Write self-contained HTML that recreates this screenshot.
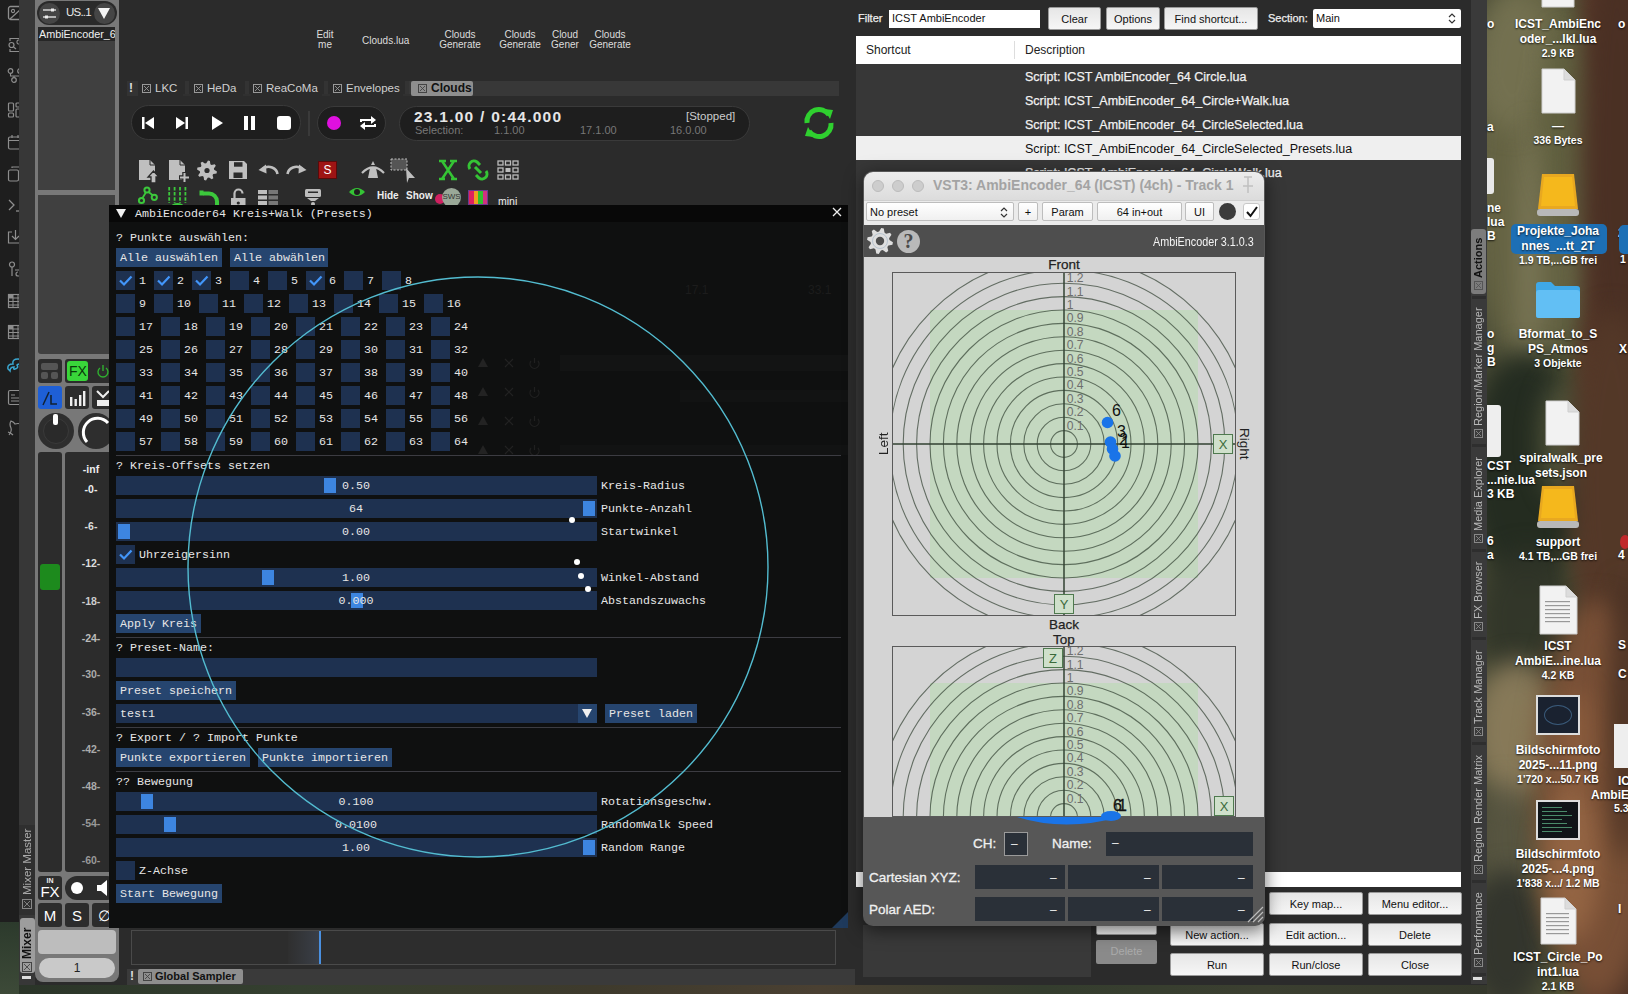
<!DOCTYPE html><html><head><meta charset="utf-8"><style>
*{margin:0;padding:0;box-sizing:border-box}
html,body{width:1628px;height:994px;overflow:hidden;background:#2b2b2b;font-family:"Liberation Sans",sans-serif;position:relative}
div{position:absolute}
.m{font-family:"Liberation Mono",monospace;font-size:11.67px;color:#e6e6e6;line-height:14px}
.fr{background:#1e3150}
.bt{background:#254672}
.mac{font-family:"Liberation Sans",sans-serif;font-size:11px;color:#111;background:linear-gradient(#fbfbfb,#e4e4e4);border:1px solid #a9a9a9;border-radius:3px;text-align:center}
.vt{writing-mode:vertical-rl;transform:rotate(180deg);white-space:nowrap}
</style></head><body>
<div style="position:absolute;left:1487px;top:0px;width:141px;height:994px;overflow:hidden;background:linear-gradient(90deg,#4a4c36 0%,#4f5236 55%,#5a3a2b 75%,#4e3326 100%)"><div style="left:-20px;top:-30px;width:130px;height:400px;border-radius:50%;background:rgba(102,100,68,.95);filter:blur(12px)"></div><div style="left:-15px;top:-10px;width:80px;height:140px;border-radius:50%;background:rgba(125,122,88,.6);filter:blur(12px)"></div><div style="left:55px;top:30px;width:50px;height:180px;border-radius:50%;background:rgba(95,95,62,.8);filter:blur(12px)"></div><div style="left:35px;top:120px;width:14px;height:280px;border-radius:50%;background:rgba(165,158,125,.55);filter:blur(12px)"></div><div style="left:-20px;top:350px;width:120px;height:240px;border-radius:50%;background:rgba(34,42,32,.95);filter:blur(12px)"></div><div style="left:53px;top:380px;width:44px;height:120px;border-radius:50%;background:rgba(110,110,75,.6);filter:blur(12px)"></div><div style="left:-10px;top:550px;width:100px;height:140px;border-radius:50%;background:rgba(48,52,40,.9);filter:blur(12px)"></div><div style="left:-15px;top:660px;width:90px;height:140px;border-radius:50%;background:rgba(150,132,98,.8);filter:blur(12px)"></div><div style="left:-10px;top:780px;width:60px;height:120px;border-radius:50%;background:rgba(95,90,72,.6);filter:blur(12px)"></div><div style="left:-20px;top:870px;width:80px;height:140px;border-radius:50%;background:rgba(50,52,44,.95);filter:blur(12px)"></div><div style="left:94px;top:-70px;width:72px;height:460px;border-radius:50%;background:rgba(74,48,36,.98);filter:blur(12px)"></div><div style="left:83px;top:310px;width:84px;height:340px;border-radius:50%;background:rgba(84,56,40,.98);filter:blur(12px)"></div><div style="left:48px;top:600px;width:124px;height:400px;border-radius:50%;background:rgba(120,80,54,.98);filter:blur(12px)"></div><div style="left:57px;top:780px;width:56px;height:160px;border-radius:50%;background:rgba(160,110,72,.7);filter:blur(12px)"></div><div style="left:72px;top:690px;width:36px;height:100px;border-radius:50%;background:rgba(150,100,65,.6);filter:blur(12px)"></div><div style="left:124px;top:580px;width:28px;height:280px;border-radius:50%;background:rgba(66,44,32,.9);filter:blur(12px)"></div></div>
<div style="position:absolute;left:0px;top:985px;width:1487px;height:9px;background:linear-gradient(90deg,#2a3428,#354030 20%,#3e3a2c 40%,#4a4032 55%,#343d2e 70%,#3b3f30 85%,#35382c)"></div>
<div style="position:absolute;left:0px;top:922px;width:19px;height:72px;background:linear-gradient(#2c3a2c,#3d4a38)"></div>
<div style="position:absolute;left:0px;top:0px;width:19px;height:922px;background:#1e1e1e"></div>
<svg style="position:absolute;left:6px;top:4px;" width="16" height="18" viewBox="0 0 16 18"><rect x="2.5" y="2.5" width="14" height="13" rx="2" fill="none" stroke="#8e8e8e" stroke-width="1.3"/><circle cx="7" cy="7" r="1.6" fill="none" stroke="#8e8e8e" stroke-width="1.1"/><path d="M4 15 L15 5" stroke="#8e8e8e" stroke-width="1.2"/></svg>
<svg style="position:absolute;left:6px;top:36px;" width="16" height="18" viewBox="0 0 16 18"><path d="M4 5 V2.5 H16 M4 13 V15.5 H16" fill="none" stroke="#8e8e8e" stroke-width="1.2"/><circle cx="5.5" cy="9" r="2.5" fill="none" stroke="#8e8e8e" stroke-width="1.2"/><path d="M7.5 11 L10 13" stroke="#8e8e8e" stroke-width="1.2"/><rect x="11" y="4" width="6" height="4" rx="1.5" fill="none" stroke="#8e8e8e" stroke-width="1.1"/></svg>
<svg style="position:absolute;left:6px;top:67px;" width="16" height="18" viewBox="0 0 16 18"><circle cx="4.5" cy="4" r="2.3" fill="none" stroke="#8e8e8e" stroke-width="1.2"/><circle cx="8" cy="13" r="2.3" fill="none" stroke="#8e8e8e" stroke-width="1.2"/><circle cx="14" cy="4" r="2.3" fill="none" stroke="#8e8e8e" stroke-width="1.2"/><path d="M4.5 6.5 V9 H14 V6.5 M8 9 V10.5" fill="none" stroke="#8e8e8e" stroke-width="1.1"/></svg>
<svg style="position:absolute;left:6px;top:101px;" width="16" height="18" viewBox="0 0 16 18"><rect x="2.5" y="2" width="5" height="8" rx="1" fill="none" stroke="#8e8e8e" stroke-width="1.2"/><rect x="2.5" y="12" width="5" height="4" rx="1" fill="none" stroke="#8e8e8e" stroke-width="1.2"/><rect x="10" y="2" width="6" height="4" rx="1" fill="none" stroke="#8e8e8e" stroke-width="1.2"/><rect x="10" y="8" width="6" height="8" rx="1" fill="none" stroke="#8e8e8e" stroke-width="1.2"/></svg>
<svg style="position:absolute;left:6px;top:133px;" width="16" height="18" viewBox="0 0 16 18"><rect x="2.5" y="4" width="14" height="12" rx="1.5" fill="none" stroke="#8e8e8e" stroke-width="1.2"/><path d="M2.5 7.5 H16 M6 2 V5 M12 2 V5" stroke="#8e8e8e" stroke-width="1.2"/></svg>
<svg style="position:absolute;left:6px;top:165px;" width="16" height="18" viewBox="0 0 16 18"><rect x="2.5" y="5" width="10" height="11" rx="1.5" fill="none" stroke="#8e8e8e" stroke-width="1.2"/><path d="M6 3 V2 H16 V12 H13" fill="none" stroke="#8e8e8e" stroke-width="1.2"/></svg>
<svg style="position:absolute;left:6px;top:196px;" width="16" height="18" viewBox="0 0 16 18"><path d="M3 4 L8 9 L3 14" fill="none" stroke="#8e8e8e" stroke-width="1.3"/><path d="M10 15 H17" stroke="#8e8e8e" stroke-width="1.3"/></svg>
<svg style="position:absolute;left:6px;top:228px;" width="16" height="18" viewBox="0 0 16 18"><path d="M6 4 H2.5 V15 H16 V4 H13" fill="none" stroke="#8e8e8e" stroke-width="1.2"/><path d="M9.5 2 V11 M6 8 L9.5 11.5 L13 8" fill="none" stroke="#8e8e8e" stroke-width="1.2"/></svg>
<svg style="position:absolute;left:6px;top:260px;" width="16" height="18" viewBox="0 0 16 18"><circle cx="6" cy="4.5" r="2.5" fill="none" stroke="#8e8e8e" stroke-width="1.2"/><path d="M6 7 V16 M9 10 H14 M12 12 A2 2 0 1 0 12 16 H16" fill="none" stroke="#8e8e8e" stroke-width="1.2"/></svg>
<svg style="position:absolute;left:6px;top:292px;" width="16" height="18" viewBox="0 0 16 18"><rect x="2.5" y="2.5" width="14" height="13" fill="none" stroke="#8e8e8e" stroke-width="1.2"/><path d="M2.5 6 H16 M2.5 9.5 H16 M2.5 13 H16 M7 2.5 V16 M12 2.5 V16" stroke="#8e8e8e" stroke-width="1"/><rect x="2.5" y="2.5" width="4.5" height="3.5" fill="#8e8e8e"/></svg>
<svg style="position:absolute;left:6px;top:323px;" width="16" height="18" viewBox="0 0 16 18"><rect x="2.5" y="2.5" width="14" height="13" fill="none" stroke="#8e8e8e" stroke-width="1.2"/><path d="M2.5 6 H16 M2.5 9.5 H16 M2.5 13 H16 M7 2.5 V16 M12 2.5 V16" stroke="#8e8e8e" stroke-width="1"/><rect x="2.5" y="2.5" width="4.5" height="3.5" fill="#8e8e8e"/></svg>
<svg style="position:absolute;left:6px;top:356px;" width="16" height="18" viewBox="0 0 16 18"><path d="M2 13 Q1 8 7 8 Q6 3 12 3 Q17 3 17 9 Q13 7 11 9 Q13 12 9 13 Q7 14 8 11 Q4 11 4 15 Z" fill="none" stroke="#3aa6cf" stroke-width="1.5"/></svg>
<svg style="position:absolute;left:6px;top:388px;" width="16" height="18" viewBox="0 0 16 18"><rect x="2.5" y="2.5" width="13" height="14" rx="1.5" fill="none" stroke="#8e8e8e" stroke-width="1.2"/><path d="M5 7 H9 M5 10 H14 M5 13 H14" stroke="#8e8e8e" stroke-width="1.1"/></svg>
<svg style="position:absolute;left:6px;top:419px;" width="16" height="18" viewBox="0 0 16 18"><path d="M3 16 Q6 12 5 9 Q3 5 5 2 Q8 3 9 5 Q12 4 15 5" fill="none" stroke="#8e8e8e" stroke-width="1.2"/><path d="M2 13 Q5 14 7 16" fill="none" stroke="#8e8e8e" stroke-width="1.2"/></svg>
<div style="position:absolute;left:19px;top:0px;width:16px;height:985px;background:#373737"></div>
<div style="position:absolute;left:19px;top:825px;width:16px;height:90px;background:#2f2f2f"></div>
<div class="vt" style="left:21px;top:833px;width:13px;height:62px;font-size:11.5px;color:#aaa;line-height:13px">Mixer Master</div>
<div style="position:absolute;left:22px;top:899px;width:10px;height:10px;border:1px solid #888"><svg style="position:absolute;left:0;top:0" width="8" height="8"><path d="M1 1L7 7M7 1L1 7" stroke="#888" stroke-width="0.9"/></svg></div>
<div style="position:absolute;left:20px;top:918px;width:15px;height:55px;background:#9d9d9d;border-radius:3px"></div>
<div class="vt" style="left:21px;top:923px;width:13px;height:36px;font-size:12px;font-weight:bold;color:#111;line-height:13px">Mixer</div>
<div style="position:absolute;left:22px;top:962px;width:10px;height:10px;border:1px solid #444"><svg style="position:absolute;left:0;top:0" width="8" height="8"><path d="M1 1L7 7M7 1L1 7" stroke="#444" stroke-width="0.9"/></svg></div>
<div style="position:absolute;left:22px;top:976px;width:9px;height:3px;background:#ddd"></div>
<div style="position:absolute;left:35px;top:0px;width:84px;height:982px;background:#787878;border-radius:0 0 8px 8px"></div>
<div style="position:absolute;left:37px;top:1px;width:80px;height:24px;background:#2a2a2a;border-radius:12px"></div>
<div style="position:absolute;left:39px;top:3px;width:21px;height:21px;background:#454545;border-radius:50%"></div>
<svg style="position:absolute;left:43px;top:8px;" width="14" height="11" viewBox="0 0 14 11"><line x1="0" y1="2" x2="13" y2="2" stroke="#eee" stroke-width="1.3"/><line x1="0" y1="9" x2="13" y2="9" stroke="#eee" stroke-width="1.3"/><rect x="8" y="0.5" width="3" height="3" fill="#eee"/><rect x="2" y="7.5" width="3" height="3" fill="#eee"/></svg>
<div style="position:absolute;left:66px;top:6px;white-space:nowrap;font-size:11.5px;color:#e8e8e8;letter-spacing:-0.8px">US..1</div>
<div style="position:absolute;left:94px;top:3px;width:21px;height:21px;background:#454545;border-radius:50%"></div>
<svg style="position:absolute;left:98px;top:8px;" width="13" height="12" viewBox="0 0 13 12"><polygon points="0,0 12,0 6,11" fill="#f4f4f4"/></svg>
<div style="position:absolute;left:38px;top:27px;width:77px;height:14px;background:#262626;overflow:hidden"><div style="left:1px;top:1px;font-size:10.8px;color:#f0f0f0;white-space:nowrap">AmbiEncoder_64</div></div>
<div style="position:absolute;left:38px;top:41px;width:77px;height:149px;background:#404040"></div>
<div style="position:absolute;left:38px;top:195px;width:77px;height:159px;background:#404040;border-radius:0 0 3px 3px"></div>
<div style="position:absolute;left:38px;top:359px;width:24px;height:24px;background:#2c2c2c;border-radius:3px"></div>
<div style="position:absolute;left:41px;top:363px;width:17px;height:7px;background:#555;border-radius:2px"></div>
<div style="position:absolute;left:41px;top:372px;width:7px;height:7px;background:#555;border-radius:2px"></div>
<div style="position:absolute;left:51px;top:372px;width:7px;height:7px;background:#555;border-radius:2px"></div>
<div style="position:absolute;left:65px;top:359px;width:54px;height:24px;background:#2c2c2c;border-radius:3px"></div>
<div style="position:absolute;left:67px;top:361px;width:21px;height:20px;background:#39d63a;border-radius:3px"><div style="left:1px;top:2px;width:20px;text-align:center;font-size:14px;color:#0a3a0a">FX</div></div>
<svg style="position:absolute;left:96px;top:364px;" width="14" height="14" viewBox="0 0 14 14"><path d="M4 4 A5 5 0 1 0 10 4" fill="none" stroke="#2fb02f" stroke-width="1.4"/><line x1="7" y1="1" x2="7" y2="7" stroke="#2fb02f" stroke-width="1.4"/></svg>
<div style="position:absolute;left:38px;top:386px;width:24px;height:23px;background:#1e5fd6;border-radius:3px"></div>
<svg style="position:absolute;left:40px;top:389px;" width="20" height="18" viewBox="0 0 20 18"><path d="M3 16 L9 3" stroke="#123" stroke-width="1.5"/><path d="M11 6 L11 15 L17 15" fill="none" stroke="#123" stroke-width="1.6"/></svg>
<div style="position:absolute;left:65px;top:386px;width:24px;height:23px;background:#2c2c2c;border-radius:3px"></div>
<svg style="position:absolute;left:68px;top:390px;" width="18" height="16" viewBox="0 0 18 16"><rect x="2" y="7" width="2.4" height="9" fill="#eee"/><rect x="6.5" y="9" width="2.4" height="7" fill="#eee"/><rect x="11" y="5" width="2.4" height="11" fill="#eee"/><rect x="15" y="1" width="2.4" height="15" fill="#eee"/></svg>
<div style="position:absolute;left:92px;top:386px;width:27px;height:23px;background:#2c2c2c;border-radius:3px"></div>
<svg style="position:absolute;left:96px;top:390px;" width="14" height="16" viewBox="0 0 14 16"><path d="M1 1 L7 7 L13 1" fill="none" stroke="#eee" stroke-width="2"/><rect x="1" y="10" width="13" height="6" fill="#eee"/></svg>
<div style="position:absolute;left:38px;top:413px;width:36px;height:36px;background:#2e2e2e;border-radius:50%"></div>
<div style="position:absolute;left:43px;top:418px;width:26px;height:26px;background:#2a2a2a;border-radius:50%;border:1px solid #3a3a3a"></div>
<div style="position:absolute;left:53px;top:414px;width:5px;height:11px;background:#fff;border-radius:2px"></div>
<div style="position:absolute;left:78px;top:413px;width:36px;height:36px;background:#2e2e2e;border-radius:50%"></div>
<svg style="position:absolute;left:78px;top:413px;" width="36" height="36" viewBox="0 0 36 36"><path d="M9 29 A13 13 0 1 1 30 10" fill="none" stroke="#fff" stroke-width="3"/></svg>
<div style="position:absolute;left:38px;top:452px;width:24px;height:420px;background:#2c2c2c;border-radius:3px"></div>
<div style="position:absolute;left:40px;top:564px;width:20px;height:26px;background:#1d8a1d;border-radius:3px"></div>
<div style="position:absolute;left:65px;top:452px;width:54px;height:420px;background:#2c2c2c;border-radius:3px"></div>
<div style="position:absolute;left:71.0px;top:463px;width:40px;text-align:center;white-space:nowrap;font-size:10.5px;font-weight:bold;color:#eee">-inf</div>
<div style="position:absolute;left:71.0px;top:483px;width:40px;text-align:center;white-space:nowrap;font-size:10.5px;font-weight:bold;color:#eee">-0-</div>
<div style="position:absolute;left:71.0px;top:520px;width:40px;text-align:center;white-space:nowrap;font-size:10.5px;font-weight:bold;color:#ddd">-6-</div>
<div style="position:absolute;left:71.0px;top:557px;width:40px;text-align:center;white-space:nowrap;font-size:10.5px;font-weight:bold;color:#ddd">-12-</div>
<div style="position:absolute;left:71.0px;top:595px;width:40px;text-align:center;white-space:nowrap;font-size:10.5px;font-weight:bold;color:#ccc">-18-</div>
<div style="position:absolute;left:71.0px;top:632px;width:40px;text-align:center;white-space:nowrap;font-size:10.5px;font-weight:bold;color:#bbb">-24-</div>
<div style="position:absolute;left:71.0px;top:668px;width:40px;text-align:center;white-space:nowrap;font-size:10.5px;font-weight:bold;color:#aaa">-30-</div>
<div style="position:absolute;left:71.0px;top:706px;width:40px;text-align:center;white-space:nowrap;font-size:10.5px;font-weight:bold;color:#aaa">-36-</div>
<div style="position:absolute;left:71.0px;top:743px;width:40px;text-align:center;white-space:nowrap;font-size:10.5px;font-weight:bold;color:#aaa">-42-</div>
<div style="position:absolute;left:71.0px;top:780px;width:40px;text-align:center;white-space:nowrap;font-size:10.5px;font-weight:bold;color:#aaa">-48-</div>
<div style="position:absolute;left:71.0px;top:817px;width:40px;text-align:center;white-space:nowrap;font-size:10.5px;font-weight:bold;color:#999">-54-</div>
<div style="position:absolute;left:71.0px;top:854px;width:40px;text-align:center;white-space:nowrap;font-size:10.5px;font-weight:bold;color:#999">-60-</div>
<div style="position:absolute;left:38px;top:876px;width:24px;height:24px;background:#2c2c2c;border-radius:3px"><div style="left:0;top:1px;width:24px;text-align:center;font-size:7px;color:#eee;font-weight:bold">IN</div><div style="left:0;top:7px;width:24px;text-align:center;font-size:15px;color:#fff">FX</div></div>
<div style="position:absolute;left:65px;top:876px;width:54px;height:24px;background:#2c2c2c;border-radius:12px"></div>
<div style="position:absolute;left:71px;top:882px;width:12px;height:12px;background:#fff;border-radius:50%"></div>
<svg style="position:absolute;left:97px;top:880px;" width="14" height="16" viewBox="0 0 14 16"><rect x="0" y="5" width="4" height="6" fill="#fff"/><polygon points="4,5 10,0 10,16 4,11" fill="#fff"/></svg>
<div style="position:absolute;left:38px;top:903px;width:24px;height:24px;background:#2c2c2c;border-radius:3px"><div style="left:0;top:4px;width:24px;text-align:center;font-size:15px;color:#fff">M</div></div>
<div style="position:absolute;left:65px;top:903px;width:24px;height:24px;background:#2c2c2c;border-radius:3px"><div style="left:0;top:4px;width:24px;text-align:center;font-size:15px;color:#fff">S</div></div>
<div style="position:absolute;left:92px;top:903px;width:27px;height:24px;background:#2c2c2c;border-radius:3px"><div style="left:0;top:4px;width:24px;text-align:center;font-size:15px;color:#fff">&#8709;</div></div>
<div style="position:absolute;left:38px;top:930px;width:78px;height:24px;background:#bdbdbd;border-radius:4px"></div>
<div style="position:absolute;left:39px;top:958px;width:76px;height:20px;background:#c9c9c9;border-radius:10px"><div style="left:0;top:3px;width:76px;text-align:center;font-size:12px;color:#222">1</div></div>
<div style="position:absolute;left:305.0px;top:30px;width:40px;text-align:center;white-space:nowrap;font-size:10px;color:#ddd;line-height:10px">Edit<br>me</div>
<div style="position:absolute;left:362px;top:35px;white-space:nowrap;font-size:10px;color:#ddd">Clouds.lua</div>
<div style="position:absolute;left:430.0px;top:30px;width:60px;text-align:center;white-space:nowrap;font-size:10px;color:#ddd;line-height:10px">Clouds<br>Generate</div>
<div style="position:absolute;left:490.0px;top:30px;width:60px;text-align:center;white-space:nowrap;font-size:10px;color:#ddd;line-height:10px">Clouds<br>Generate</div>
<div style="position:absolute;left:535.0px;top:30px;width:60px;text-align:center;white-space:nowrap;font-size:10px;color:#ddd;line-height:10px">Cloud<br>Gener</div>
<div style="position:absolute;left:580.0px;top:30px;width:60px;text-align:center;white-space:nowrap;font-size:10px;color:#ddd;line-height:10px">Clouds<br>Generate</div>
<div style="position:absolute;left:405px;top:81px;width:434px;height:15px;background:#383838"></div>
<div style="position:absolute;left:127px;top:81px;width:11px;height:15px;background:#333"></div>
<div style="position:absolute;left:129px;top:81px;white-space:nowrap;font-size:12px;color:#ddd;font-weight:bold">!</div>
<div style="position:absolute;left:142px;top:84px;width:9px;height:9px;border:1px solid #999"><svg style="position:absolute;left:0;top:0" width="7" height="7"><path d="M1 1L6 6M6 1L1 6" stroke="#999" stroke-width="0.9"/></svg></div>
<div style="position:absolute;left:155px;top:82px;white-space:nowrap;font-size:11.5px;color:#d0d0d0">LKC</div>
<div style="position:absolute;left:185px;top:81px;width:4px;height:14px;background:#333"></div>
<div style="position:absolute;left:183px;top:94px;width:8px;height:2px;background:#303030"></div>
<div style="position:absolute;left:194px;top:84px;width:9px;height:9px;border:1px solid #999"><svg style="position:absolute;left:0;top:0" width="7" height="7"><path d="M1 1L6 6M6 1L1 6" stroke="#999" stroke-width="0.9"/></svg></div>
<div style="position:absolute;left:207px;top:82px;white-space:nowrap;font-size:11.5px;color:#d0d0d0">HeDa</div>
<div style="position:absolute;left:245px;top:81px;width:4px;height:14px;background:#333"></div>
<div style="position:absolute;left:243px;top:94px;width:8px;height:2px;background:#303030"></div>
<div style="position:absolute;left:253px;top:84px;width:9px;height:9px;border:1px solid #999"><svg style="position:absolute;left:0;top:0" width="7" height="7"><path d="M1 1L6 6M6 1L1 6" stroke="#999" stroke-width="0.9"/></svg></div>
<div style="position:absolute;left:266px;top:82px;white-space:nowrap;font-size:11.5px;color:#d0d0d0">ReaCoMa</div>
<div style="position:absolute;left:324px;top:81px;width:4px;height:14px;background:#333"></div>
<div style="position:absolute;left:322px;top:94px;width:8px;height:2px;background:#303030"></div>
<div style="position:absolute;left:333px;top:84px;width:9px;height:9px;border:1px solid #999"><svg style="position:absolute;left:0;top:0" width="7" height="7"><path d="M1 1L6 6M6 1L1 6" stroke="#999" stroke-width="0.9"/></svg></div>
<div style="position:absolute;left:346px;top:82px;white-space:nowrap;font-size:11.5px;color:#d0d0d0">Envelopes</div>
<div style="position:absolute;left:405px;top:81px;width:4px;height:14px;background:#333"></div>
<div style="position:absolute;left:403px;top:94px;width:8px;height:2px;background:#303030"></div>
<div style="position:absolute;left:411px;top:81px;width:62px;height:15px;background:#8e8e8e;border-radius:2px"></div>
<div style="position:absolute;left:418px;top:84px;width:9px;height:9px;border:1px solid #444"><svg style="position:absolute;left:0;top:0" width="7" height="7"><path d="M1 1L6 6M6 1L1 6" stroke="#444" stroke-width="0.9"/></svg></div>
<div style="position:absolute;left:431px;top:81px;white-space:nowrap;font-size:12px;color:#111;font-weight:bold">Clouds</div>
<div style="position:absolute;left:131px;top:105px;width:170px;height:35px;background:#1e1e1e;border:1px solid #3a3a3a;border-radius:18px"></div>
<svg style="position:absolute;left:141px;top:116px;" width="14" height="14" viewBox="0 0 14 14"><rect x="1" y="1" width="2.5" height="12" fill="#fff"/><polygon points="13,1 13,13 4,7" fill="#fff"/></svg>
<svg style="position:absolute;left:175px;top:116px;" width="14" height="14" viewBox="0 0 14 14"><rect x="10.5" y="1" width="2.5" height="12" fill="#fff"/><polygon points="1,1 1,13 10,7" fill="#fff"/></svg>
<svg style="position:absolute;left:210px;top:115px;" width="14" height="16" viewBox="0 0 14 16"><polygon points="2,1 2,15 13,8" fill="#fff"/></svg>
<svg style="position:absolute;left:243px;top:115px;" width="14" height="16" viewBox="0 0 14 16"><rect x="1" y="1" width="4" height="14" fill="#fff"/><rect x="8" y="1" width="4" height="14" fill="#fff"/></svg>
<div style="position:absolute;left:277px;top:116px;width:14px;height:14px;background:#fff;border-radius:3px"></div>
<div style="position:absolute;left:308px;top:111px;width:2px;height:25px;background:#3a3a3a"></div>
<div style="position:absolute;left:317px;top:106px;width:69px;height:34px;background:#1e1e1e;border:1px solid #3a3a3a;border-radius:17px"></div>
<div style="position:absolute;left:327px;top:116px;width:14px;height:14px;background:#e010e0;border-radius:50%"></div>
<svg style="position:absolute;left:359px;top:114px;" width="18" height="18" viewBox="0 0 18 18"><path d="M2 8 V6 H14" fill="none" stroke="#fff" stroke-width="2"/><polygon points="12,2 17,6 12,10" fill="#fff"/><path d="M16 10 V12 H4" fill="none" stroke="#fff" stroke-width="2"/><polygon points="6,8 1,12 6,16" fill="#fff"/></svg>
<div style="position:absolute;left:399px;top:106px;width:351px;height:35px;background:#1e1e1e;border:1px solid #3a3a3a;border-radius:18px"></div>
<div style="position:absolute;left:414px;top:108px;white-space:nowrap;font-size:15.5px;font-weight:bold;color:#e6e6e6;letter-spacing:1.25px">23.1.00 / 0:44.000</div>
<div style="position:absolute;left:415px;top:124px;white-space:nowrap;font-size:11px;color:#777">Selection:</div>
<div style="position:absolute;left:494px;top:124px;white-space:nowrap;font-size:11px;color:#777">1.1.00</div>
<div style="position:absolute;left:580px;top:124px;white-space:nowrap;font-size:11px;color:#777">17.1.00</div>
<div style="position:absolute;left:670px;top:124px;white-space:nowrap;font-size:11px;color:#777">16.0.00</div>
<div style="position:absolute;left:686px;top:110px;white-space:nowrap;font-size:11.5px;color:#ccc">[Stopped]</div>
<svg style="position:absolute;left:802px;top:106px;" width="34" height="34" viewBox="0 0 34 34"><path d="M5 17 A12 12 0 0 1 27 9" fill="none" stroke="#2fd02f" stroke-width="5"/><polygon points="22,3 31,4 28,13" fill="#2fd02f"/><path d="M29 17 A12 12 0 0 1 7 25" fill="none" stroke="#2fd02f" stroke-width="5"/><polygon points="12,31 3,30 6,21" fill="#2fd02f"/></svg>
<svg style="position:absolute;left:120px;top:150px;" width="220" height="40" viewBox="0 0 220 40"><g transform="translate(-120 -150)"><path d="M139 160 H150 L155 165 V180 H139 Z" fill="#bfbfbf"/><path d="M150 160 V165 H155" fill="none" stroke="#2b2b2b" stroke-width="1"/><path d="M153.5 171 L159 177 H156 V183 H151 V177 H148 Z" fill="#bfbfbf" stroke="#2b2b2b" stroke-width="1.3"/><path d="M169 160 H180 L185 165 V180 H169 Z" fill="#bfbfbf"/><path d="M180 160 V165 H185" fill="none" stroke="#2b2b2b" stroke-width="1"/><path d="M184.5 172 V183 M179 177.5 H190" stroke="#2b2b2b" stroke-width="4.5"/><path d="M184.5 173 V182 M180 177.5 H189" stroke="#bfbfbf" stroke-width="2"/><polygon points="216.95,171.48 216.57,173.40 213.35,173.89 212.57,175.07 213.34,178.23 211.71,179.32 209.09,177.39 207.71,177.67 206.02,180.45 204.10,180.07 203.61,176.85 202.43,176.07 199.27,176.84 198.18,175.21 200.11,172.59 199.83,171.21 197.05,169.52 197.43,167.60 200.65,167.11 201.43,165.93 200.66,162.77 202.29,161.68 204.91,163.61 206.29,163.33 207.98,160.55 209.90,160.93 210.39,164.15 211.57,164.93 214.73,164.16 215.82,165.79 213.89,168.41 214.17,169.79" fill="#bfbfbf"/><circle cx="207" cy="170.5" r="2.6" fill="#2b2b2b"/><path d="M229 161 H244 L247 164 V179 H229 Z" fill="#bfbfbf" rx="2"/><rect x="234" y="162.2" width="8.5" height="4.5" fill="#2b2b2b"/><rect x="233.5" y="172.5" width="9" height="5.5" fill="#2b2b2b"/><path d="M263 168.5 A9 8 0 0 1 277.5 174" fill="none" stroke="#bfbfbf" stroke-width="2.6"/><polygon points="258.5,170 266,164.5 266.5,173.5" fill="#bfbfbf"/><path d="M302 168.5 A9 8 0 0 0 287.5 174" fill="none" stroke="#bfbfbf" stroke-width="2.6"/><polygon points="306.5,170 299,164.5 298.5,173.5" fill="#bfbfbf"/></g></svg>
<div style="position:absolute;left:318px;top:161px;width:19px;height:18px;background:#9e1414;border:1px solid #5a0a0a"><div style="left:0;top:1px;width:17px;text-align:center;font-size:12px;color:#fff">S</div></div>
<svg style="position:absolute;left:361px;top:160px;" width="24" height="20" viewBox="0 0 24 20"><path d="M1 13 Q12 2 23 13" fill="none" stroke="#bfbfbf" stroke-width="2.2"/><polygon points="12,1 14,5 10,5" fill="#bfbfbf"/><polygon points="9,8 15,8 17,18 7,18" fill="#bfbfbf"/></svg>
<svg style="position:absolute;left:390px;top:158px;" width="26" height="26" viewBox="0 0 26 26"><rect x="1" y="1" width="16" height="11" fill="#555" stroke="#bfbfbf" stroke-dasharray="2 1.5"/><polygon points="16,10 25,20 19,20 17,25" fill="#bfbfbf"/></svg>
<svg style="position:absolute;left:437px;top:159px;" width="22" height="22" viewBox="0 0 22 22"><path d="M2 2 H9 M13 2 H20 M5 2 Q11 11 17 20 M17 2 Q11 11 5 20 M2 20 H8 M14 20 H20" fill="none" stroke="#35c435" stroke-width="2.5"/></svg>
<svg style="position:absolute;left:467px;top:159px;" width="22" height="22" viewBox="0 0 22 22"><path d="M3 10 A5 5 0 0 1 10 3 L13 6 M19 12 A5 5 0 0 1 12 19 L9 16 M8 8 L14 14" fill="none" stroke="#35c435" stroke-width="3"/></svg>
<svg style="position:absolute;left:497px;top:160px;" width="22" height="20" viewBox="0 0 22 20"><g fill="none" stroke="#bbb" stroke-width="1.3"><rect x="1" y="1" width="5" height="4"/><rect x="8.5" y="1" width="5" height="4"/><rect x="16" y="1" width="5" height="4"/><rect x="1" y="8" width="5" height="4"/><rect x="16" y="8" width="5" height="4"/><rect x="1" y="15" width="5" height="4"/><rect x="8.5" y="15" width="5" height="4"/><rect x="16" y="15" width="5" height="4"/></g><rect x="8.5" y="8" width="5" height="4" fill="#bbb"/></svg>
<svg style="position:absolute;left:120px;top:184px;" width="220" height="21" viewBox="0 0 220 21"><g transform="translate(-120 -184)"><circle cx="147" cy="190" r="2.6" fill="none" stroke="#3cc83c" stroke-width="2"/><circle cx="141.5" cy="200.5" r="2.6" fill="none" stroke="#3cc83c" stroke-width="2"/><circle cx="154.3" cy="197.3" r="2.6" fill="none" stroke="#3cc83c" stroke-width="2"/><path d="M146 192.3 L142.5 198 M148.5 192 L152.8 195.3" stroke="#3cc83c" stroke-width="1.8"/><path d="M169.2 187 V203 M174.6 187 V203 M180 187 V203 M185.4 187 V203" stroke="#3cc83c" stroke-width="1.8" stroke-dasharray="3.5 1.6"/><ellipse cx="177.5" cy="206" rx="6" ry="3" fill="#3cc83c"/><path d="M203 193.5 H209 A8 8 0 0 1 217 201.5 V206" fill="none" stroke="#3cc83c" stroke-width="4"/><rect x="199.5" y="190.5" width="4" height="5" fill="#3cc83c"/><path d="M234.5 198 V193.5 A4 4 0 0 1 242.5 193.5" fill="none" stroke="#bdbdbd" stroke-width="2.2"/><rect x="231" y="198" width="14.5" height="9" fill="#bdbdbd"/><circle cx="238.3" cy="203" r="1.6" fill="#2b2b2b"/><g fill="#bdbdbd"><rect x="258" y="190" width="9" height="4"/><rect x="258" y="195.5" width="9" height="4"/><rect x="258" y="201" width="9" height="4"/></g><g fill="#777"><rect x="268.5" y="190" width="9.5" height="4"/><rect x="268.5" y="195.5" width="9.5" height="4"/><rect x="268.5" y="201" width="9.5" height="4"/></g><rect x="305" y="189" width="16" height="8" rx="1.5" fill="#bdbdbd"/><rect x="308" y="191.5" width="10" height="1.5" fill="#2b2b2b"/><path d="M307 198 H319 L315 201 H311 Z" fill="#bdbdbd"/><circle cx="313" cy="204" r="2" fill="#bdbdbd"/></g></svg>
<div style="position:absolute;left:120px;top:184px;width:730px;height:21px;overflow:hidden"><svg style="position:absolute;left:228px;top:1px;" width="18" height="14" viewBox="0 0 18 14"><path d="M1 7 Q9 -1 17 7 Q9 15 1 7Z" fill="#35c435"/><circle cx="9" cy="7" r="3" fill="#1e1e1e"/></svg><div style="left:257px;top:6px;font-size:10px;color:#eee;font-weight:bold">Hide</div><div style="left:286px;top:6px;font-size:10px;color:#eee;font-weight:bold">Show</div><div style="left:315px;top:10px;width:10px;height:10px;border-radius:50%;background:#d02060"></div><div style="left:322px;top:4px;width:19px;height:19px;border-radius:50%;background:#9aa898;font-size:8px;color:#333;text-align:center;line-height:18px">SWS</div><div style="left:348px;top:6px;width:20px;height:15px;border:1px solid #6a3a90;background:linear-gradient(90deg,#e02060 0 25%,#f0a020 25% 50%,#30c030 50% 75%,#d03080 75%)"></div><div style="left:378px;top:11px;font-size:10.5px;color:#eee">mini</div></div>
<div style="position:absolute;left:131px;top:930px;width:705px;height:35px;background:#2d2d2d;border:1px solid #4a4a4a"></div>
<div style="position:absolute;left:288px;top:931px;width:32px;height:33px;background:linear-gradient(90deg,#2f2f2f,#3a3f48)"></div>
<div style="position:absolute;left:319px;top:931px;width:2px;height:33px;background:#4a90e0"></div>
<div style="position:absolute;left:127px;top:969px;width:728px;height:16px;background:#3a3a3a"></div>
<div style="position:absolute;left:130px;top:969px;white-space:nowrap;font-size:12px;color:#ddd;font-weight:bold">!</div>
<div style="position:absolute;left:138px;top:969px;width:105px;height:15px;background:#8e8e8e;border-radius:2px"></div>
<div style="position:absolute;left:143px;top:972px;width:9px;height:9px;border:1px solid #444"><svg style="position:absolute;left:0;top:0" width="7" height="7"><path d="M1 1L6 6M6 1L1 6" stroke="#444" stroke-width="0.9"/></svg></div>
<div style="position:absolute;left:155px;top:970px;white-space:nowrap;font-size:11px;color:#111;font-weight:bold">Global Sampler</div>
<div style="position:absolute;left:109px;top:205px;width:739px;height:723px;background:#0f1010"></div>
<div style="position:absolute;left:109px;top:205px;width:739px;height:17px;background:#080808"></div>
<svg style="position:absolute;left:116px;top:209px;" width="11" height="10" viewBox="0 0 11 10"><polygon points="0,0 10,0 5,9" fill="#f0f0f0"/></svg>
<div class="m" style="left:135px;top:207px">AmbiEncoder64 Kreis+Walk (Presets)</div>
<svg style="position:absolute;left:832px;top:207px;" width="10" height="10" viewBox="0 0 10 10"><path d="M1 1L9 9M9 1L1 9" stroke="#eee" stroke-width="1.3"/></svg>
<svg style="position:absolute;left:109px;top:222px;" width="739" height="706" viewBox="0 0 739 706"><g transform="translate(-109 -222)"><polygon points="478,367 488,367 483,358" fill="#232323"/><path d="M505 359 L513 367 M513 359 L505 367" stroke="#222" stroke-width="1.2"/><path d="M531 361 A4.5 4.5 0 1 0 538 361 M534.5 358 V363" fill="none" stroke="#202020" stroke-width="1.2"/><polygon points="478,396 488,396 483,387" fill="#232323"/><path d="M505 388 L513 396 M513 388 L505 396" stroke="#222" stroke-width="1.2"/><path d="M531 390 A4.5 4.5 0 1 0 538 390 M534.5 387 V392" fill="none" stroke="#202020" stroke-width="1.2"/><polygon points="478,425 488,425 483,416" fill="#232323"/><path d="M505 417 L513 425 M513 417 L505 425" stroke="#222" stroke-width="1.2"/><path d="M531 419 A4.5 4.5 0 1 0 538 419 M534.5 416 V421" fill="none" stroke="#202020" stroke-width="1.2"/><polygon points="478,454 488,454 483,445" fill="#232323"/><path d="M505 446 L513 454 M513 446 L505 454" stroke="#222" stroke-width="1.2"/><path d="M531 448 A4.5 4.5 0 1 0 538 448 M534.5 445 V450" fill="none" stroke="#202020" stroke-width="1.2"/><text x="685" y="294" font-family="Liberation Sans" font-size="12" fill="#1c1c1c">17.1</text><text x="808" y="294" font-family="Liberation Sans" font-size="12" fill="#1c1c1c">33.1</text><rect x="560" y="355" width="290" height="16" fill="#131414"/><rect x="680" y="390" width="170" height="12" fill="#121313"/><rect x="560" y="445" width="290" height="10" fill="#121313"/></g></svg>
<div class="m" style="left:116px;top:231px;">? Punkte auswählen:</div>
<div style="position:absolute;left:116px;top:248px;width:106px;height:19px;background:#26456f"><div class="m" style="left:4px;top:3px">Alle auswählen</div></div>
<div style="position:absolute;left:230px;top:248px;width:98px;height:19px;background:#26456f"><div class="m" style="left:4px;top:3px">Alle abwählen</div></div>
<div style="position:absolute;left:116px;top:271px;width:19px;height:19px;background:#1e3150"><svg style="position:absolute;left:0;top:0" width="19" height="19"><path d="M4 9.5 L8 13.5 L15.5 5.5" fill="none" stroke="#4296fa" stroke-width="2.2"/></svg></div>
<div class="m" style="left:139px;top:274px;">1</div>
<div style="position:absolute;left:154px;top:271px;width:19px;height:19px;background:#1e3150"><svg style="position:absolute;left:0;top:0" width="19" height="19"><path d="M4 9.5 L8 13.5 L15.5 5.5" fill="none" stroke="#4296fa" stroke-width="2.2"/></svg></div>
<div class="m" style="left:177px;top:274px;">2</div>
<div style="position:absolute;left:192px;top:271px;width:19px;height:19px;background:#1e3150"><svg style="position:absolute;left:0;top:0" width="19" height="19"><path d="M4 9.5 L8 13.5 L15.5 5.5" fill="none" stroke="#4296fa" stroke-width="2.2"/></svg></div>
<div class="m" style="left:215px;top:274px;">3</div>
<div style="position:absolute;left:230px;top:271px;width:19px;height:19px;background:#1e3150"></div>
<div class="m" style="left:253px;top:274px;">4</div>
<div style="position:absolute;left:268px;top:271px;width:19px;height:19px;background:#1e3150"></div>
<div class="m" style="left:291px;top:274px;">5</div>
<div style="position:absolute;left:306px;top:271px;width:19px;height:19px;background:#1e3150"><svg style="position:absolute;left:0;top:0" width="19" height="19"><path d="M4 9.5 L8 13.5 L15.5 5.5" fill="none" stroke="#4296fa" stroke-width="2.2"/></svg></div>
<div class="m" style="left:329px;top:274px;">6</div>
<div style="position:absolute;left:344px;top:271px;width:19px;height:19px;background:#1e3150"></div>
<div class="m" style="left:367px;top:274px;">7</div>
<div style="position:absolute;left:382px;top:271px;width:19px;height:19px;background:#1e3150"></div>
<div class="m" style="left:405px;top:274px;">8</div>
<div style="position:absolute;left:116px;top:294px;width:19px;height:19px;background:#1e3150"></div>
<div class="m" style="left:139px;top:297px;">9</div>
<div style="position:absolute;left:154px;top:294px;width:19px;height:19px;background:#1e3150"></div>
<div class="m" style="left:177px;top:297px;">10</div>
<div style="position:absolute;left:199px;top:294px;width:19px;height:19px;background:#1e3150"></div>
<div class="m" style="left:222px;top:297px;">11</div>
<div style="position:absolute;left:244px;top:294px;width:19px;height:19px;background:#1e3150"></div>
<div class="m" style="left:267px;top:297px;">12</div>
<div style="position:absolute;left:289px;top:294px;width:19px;height:19px;background:#1e3150"></div>
<div class="m" style="left:312px;top:297px;">13</div>
<div style="position:absolute;left:334px;top:294px;width:19px;height:19px;background:#1e3150"></div>
<div class="m" style="left:357px;top:297px;">14</div>
<div style="position:absolute;left:379px;top:294px;width:19px;height:19px;background:#1e3150"></div>
<div class="m" style="left:402px;top:297px;">15</div>
<div style="position:absolute;left:424px;top:294px;width:19px;height:19px;background:#1e3150"></div>
<div class="m" style="left:447px;top:297px;">16</div>
<div style="position:absolute;left:116px;top:317px;width:19px;height:19px;background:#1e3150"></div>
<div class="m" style="left:139px;top:320px;">17</div>
<div style="position:absolute;left:161px;top:317px;width:19px;height:19px;background:#1e3150"></div>
<div class="m" style="left:184px;top:320px;">18</div>
<div style="position:absolute;left:206px;top:317px;width:19px;height:19px;background:#1e3150"></div>
<div class="m" style="left:229px;top:320px;">19</div>
<div style="position:absolute;left:251px;top:317px;width:19px;height:19px;background:#1e3150"></div>
<div class="m" style="left:274px;top:320px;">20</div>
<div style="position:absolute;left:296px;top:317px;width:19px;height:19px;background:#1e3150"></div>
<div class="m" style="left:319px;top:320px;">21</div>
<div style="position:absolute;left:341px;top:317px;width:19px;height:19px;background:#1e3150"></div>
<div class="m" style="left:364px;top:320px;">22</div>
<div style="position:absolute;left:386px;top:317px;width:19px;height:19px;background:#1e3150"></div>
<div class="m" style="left:409px;top:320px;">23</div>
<div style="position:absolute;left:431px;top:317px;width:19px;height:19px;background:#1e3150"></div>
<div class="m" style="left:454px;top:320px;">24</div>
<div style="position:absolute;left:116px;top:340px;width:19px;height:19px;background:#1e3150"></div>
<div class="m" style="left:139px;top:343px;">25</div>
<div style="position:absolute;left:161px;top:340px;width:19px;height:19px;background:#1e3150"></div>
<div class="m" style="left:184px;top:343px;">26</div>
<div style="position:absolute;left:206px;top:340px;width:19px;height:19px;background:#1e3150"></div>
<div class="m" style="left:229px;top:343px;">27</div>
<div style="position:absolute;left:251px;top:340px;width:19px;height:19px;background:#1e3150"></div>
<div class="m" style="left:274px;top:343px;">28</div>
<div style="position:absolute;left:296px;top:340px;width:19px;height:19px;background:#1e3150"></div>
<div class="m" style="left:319px;top:343px;">29</div>
<div style="position:absolute;left:341px;top:340px;width:19px;height:19px;background:#1e3150"></div>
<div class="m" style="left:364px;top:343px;">30</div>
<div style="position:absolute;left:386px;top:340px;width:19px;height:19px;background:#1e3150"></div>
<div class="m" style="left:409px;top:343px;">31</div>
<div style="position:absolute;left:431px;top:340px;width:19px;height:19px;background:#1e3150"></div>
<div class="m" style="left:454px;top:343px;">32</div>
<div style="position:absolute;left:116px;top:363px;width:19px;height:19px;background:#1e3150"></div>
<div class="m" style="left:139px;top:366px;">33</div>
<div style="position:absolute;left:161px;top:363px;width:19px;height:19px;background:#1e3150"></div>
<div class="m" style="left:184px;top:366px;">34</div>
<div style="position:absolute;left:206px;top:363px;width:19px;height:19px;background:#1e3150"></div>
<div class="m" style="left:229px;top:366px;">35</div>
<div style="position:absolute;left:251px;top:363px;width:19px;height:19px;background:#1e3150"></div>
<div class="m" style="left:274px;top:366px;">36</div>
<div style="position:absolute;left:296px;top:363px;width:19px;height:19px;background:#1e3150"></div>
<div class="m" style="left:319px;top:366px;">37</div>
<div style="position:absolute;left:341px;top:363px;width:19px;height:19px;background:#1e3150"></div>
<div class="m" style="left:364px;top:366px;">38</div>
<div style="position:absolute;left:386px;top:363px;width:19px;height:19px;background:#1e3150"></div>
<div class="m" style="left:409px;top:366px;">39</div>
<div style="position:absolute;left:431px;top:363px;width:19px;height:19px;background:#1e3150"></div>
<div class="m" style="left:454px;top:366px;">40</div>
<div style="position:absolute;left:116px;top:386px;width:19px;height:19px;background:#1e3150"></div>
<div class="m" style="left:139px;top:389px;">41</div>
<div style="position:absolute;left:161px;top:386px;width:19px;height:19px;background:#1e3150"></div>
<div class="m" style="left:184px;top:389px;">42</div>
<div style="position:absolute;left:206px;top:386px;width:19px;height:19px;background:#1e3150"></div>
<div class="m" style="left:229px;top:389px;">43</div>
<div style="position:absolute;left:251px;top:386px;width:19px;height:19px;background:#1e3150"></div>
<div class="m" style="left:274px;top:389px;">44</div>
<div style="position:absolute;left:296px;top:386px;width:19px;height:19px;background:#1e3150"></div>
<div class="m" style="left:319px;top:389px;">45</div>
<div style="position:absolute;left:341px;top:386px;width:19px;height:19px;background:#1e3150"></div>
<div class="m" style="left:364px;top:389px;">46</div>
<div style="position:absolute;left:386px;top:386px;width:19px;height:19px;background:#1e3150"></div>
<div class="m" style="left:409px;top:389px;">47</div>
<div style="position:absolute;left:431px;top:386px;width:19px;height:19px;background:#1e3150"></div>
<div class="m" style="left:454px;top:389px;">48</div>
<div style="position:absolute;left:116px;top:409px;width:19px;height:19px;background:#1e3150"></div>
<div class="m" style="left:139px;top:412px;">49</div>
<div style="position:absolute;left:161px;top:409px;width:19px;height:19px;background:#1e3150"></div>
<div class="m" style="left:184px;top:412px;">50</div>
<div style="position:absolute;left:206px;top:409px;width:19px;height:19px;background:#1e3150"></div>
<div class="m" style="left:229px;top:412px;">51</div>
<div style="position:absolute;left:251px;top:409px;width:19px;height:19px;background:#1e3150"></div>
<div class="m" style="left:274px;top:412px;">52</div>
<div style="position:absolute;left:296px;top:409px;width:19px;height:19px;background:#1e3150"></div>
<div class="m" style="left:319px;top:412px;">53</div>
<div style="position:absolute;left:341px;top:409px;width:19px;height:19px;background:#1e3150"></div>
<div class="m" style="left:364px;top:412px;">54</div>
<div style="position:absolute;left:386px;top:409px;width:19px;height:19px;background:#1e3150"></div>
<div class="m" style="left:409px;top:412px;">55</div>
<div style="position:absolute;left:431px;top:409px;width:19px;height:19px;background:#1e3150"></div>
<div class="m" style="left:454px;top:412px;">56</div>
<div style="position:absolute;left:116px;top:432px;width:19px;height:19px;background:#1e3150"></div>
<div class="m" style="left:139px;top:435px;">57</div>
<div style="position:absolute;left:161px;top:432px;width:19px;height:19px;background:#1e3150"></div>
<div class="m" style="left:184px;top:435px;">58</div>
<div style="position:absolute;left:206px;top:432px;width:19px;height:19px;background:#1e3150"></div>
<div class="m" style="left:229px;top:435px;">59</div>
<div style="position:absolute;left:251px;top:432px;width:19px;height:19px;background:#1e3150"></div>
<div class="m" style="left:274px;top:435px;">60</div>
<div style="position:absolute;left:296px;top:432px;width:19px;height:19px;background:#1e3150"></div>
<div class="m" style="left:319px;top:435px;">61</div>
<div style="position:absolute;left:341px;top:432px;width:19px;height:19px;background:#1e3150"></div>
<div class="m" style="left:364px;top:435px;">62</div>
<div style="position:absolute;left:386px;top:432px;width:19px;height:19px;background:#1e3150"></div>
<div class="m" style="left:409px;top:435px;">63</div>
<div style="position:absolute;left:431px;top:432px;width:19px;height:19px;background:#1e3150"></div>
<div class="m" style="left:454px;top:435px;">64</div>
<div style="position:absolute;left:116px;top:455px;width:725px;height:1px;background:#3c3c42"></div>
<div class="m" style="left:116px;top:459px;">? Kreis-Offsets setzen</div>
<div style="position:absolute;left:116px;top:476px;width:481px;height:19px;background:#1e3150"></div>
<div style="position:absolute;left:324px;top:478px;width:12px;height:15px;background:#3d85e0"></div>
<div class="m" style="position:absolute;left:306.0px;top:479px;width:100px;text-align:center;white-space:nowrap;">0.50</div>
<div class="m" style="left:601px;top:479px;">Kreis-Radius</div>
<div style="position:absolute;left:116px;top:499px;width:481px;height:19px;background:#1e3150"></div>
<div style="position:absolute;left:583px;top:501px;width:12px;height:15px;background:#3d85e0"></div>
<div class="m" style="position:absolute;left:306.0px;top:502px;width:100px;text-align:center;white-space:nowrap;">64</div>
<div class="m" style="left:601px;top:502px;">Punkte-Anzahl</div>
<div style="position:absolute;left:116px;top:522px;width:481px;height:19px;background:#1e3150"></div>
<div style="position:absolute;left:118px;top:524px;width:12px;height:15px;background:#3d85e0"></div>
<div class="m" style="position:absolute;left:306.0px;top:525px;width:100px;text-align:center;white-space:nowrap;">0.00</div>
<div class="m" style="left:601px;top:525px;">Startwinkel</div>
<div style="position:absolute;left:116px;top:545px;width:19px;height:19px;background:#1e3150"><svg style="position:absolute;left:0;top:0" width="19" height="19"><path d="M4 9.5 L8 13.5 L15.5 5.5" fill="none" stroke="#4296fa" stroke-width="2.2"/></svg></div>
<div class="m" style="left:139px;top:548px;">Uhrzeigersinn</div>
<div style="position:absolute;left:116px;top:568px;width:481px;height:19px;background:#1e3150"></div>
<div style="position:absolute;left:262px;top:570px;width:12px;height:15px;background:#3d85e0"></div>
<div class="m" style="position:absolute;left:306.0px;top:571px;width:100px;text-align:center;white-space:nowrap;">1.00</div>
<div class="m" style="left:601px;top:571px;">Winkel-Abstand</div>
<div style="position:absolute;left:116px;top:591px;width:481px;height:19px;background:#1e3150"></div>
<div style="position:absolute;left:351px;top:593px;width:12px;height:15px;background:#3d85e0"></div>
<div class="m" style="position:absolute;left:306.0px;top:594px;width:100px;text-align:center;white-space:nowrap;">0.000</div>
<div class="m" style="left:601px;top:594px;">Abstandszuwachs</div>
<div style="position:absolute;left:116px;top:614px;width:85px;height:19px;background:#26456f"><div class="m" style="left:4px;top:3px">Apply Kreis</div></div>
<div style="position:absolute;left:116px;top:637px;width:725px;height:1px;background:#3c3c42"></div>
<div class="m" style="left:116px;top:641px;">? Preset-Name:</div>
<div style="position:absolute;left:116px;top:658px;width:481px;height:19px;background:#1e3150"></div>
<div style="position:absolute;left:116px;top:681px;width:120px;height:19px;background:#26456f"><div class="m" style="left:4px;top:3px">Preset speichern</div></div>
<div style="position:absolute;left:116px;top:704px;width:481px;height:19px;background:#1e3150"><div class="m" style="left:4px;top:3px">test1</div></div>
<div style="position:absolute;left:578px;top:704px;width:19px;height:19px;background:#26456f"><svg style="position:absolute;left:4px;top:5px" width="11" height="10"><polygon points="0,0 10,0 5,9" fill="#f0f0f0"/></svg></div>
<div style="position:absolute;left:605px;top:704px;width:92px;height:19px;background:#26456f"><div class="m" style="left:4px;top:3px">Preset laden</div></div>
<div style="position:absolute;left:116px;top:727px;width:725px;height:1px;background:#3c3c42"></div>
<div class="m" style="left:116px;top:731px;">? Export / ? Import Punkte</div>
<div style="position:absolute;left:116px;top:748px;width:134px;height:19px;background:#26456f"><div class="m" style="left:4px;top:3px">Punkte exportieren</div></div>
<div style="position:absolute;left:258px;top:748px;width:134px;height:19px;background:#26456f"><div class="m" style="left:4px;top:3px">Punkte importieren</div></div>
<div style="position:absolute;left:116px;top:771px;width:725px;height:1px;background:#3c3c42"></div>
<div class="m" style="left:116px;top:775px;">?? Bewegung</div>
<div style="position:absolute;left:116px;top:792px;width:481px;height:19px;background:#1e3150"></div>
<div style="position:absolute;left:141px;top:794px;width:12px;height:15px;background:#3d85e0"></div>
<div class="m" style="position:absolute;left:306.0px;top:795px;width:100px;text-align:center;white-space:nowrap;">0.100</div>
<div class="m" style="left:601px;top:795px;">Rotationsgeschw.</div>
<div style="position:absolute;left:116px;top:815px;width:481px;height:19px;background:#1e3150"></div>
<div style="position:absolute;left:164px;top:817px;width:12px;height:15px;background:#3d85e0"></div>
<div class="m" style="position:absolute;left:306.0px;top:818px;width:100px;text-align:center;white-space:nowrap;">0.0100</div>
<div class="m" style="left:601px;top:818px;">RandomWalk Speed</div>
<div style="position:absolute;left:116px;top:838px;width:481px;height:19px;background:#1e3150"></div>
<div style="position:absolute;left:583px;top:840px;width:12px;height:15px;background:#3d85e0"></div>
<div class="m" style="position:absolute;left:306.0px;top:841px;width:100px;text-align:center;white-space:nowrap;">1.00</div>
<div class="m" style="left:601px;top:841px;">Random Range</div>
<div style="position:absolute;left:116px;top:861px;width:19px;height:19px;background:#1e3150"></div>
<div class="m" style="left:139px;top:864px;">Z-Achse</div>
<div style="position:absolute;left:116px;top:884px;width:106px;height:19px;background:#26456f"><div class="m" style="left:4px;top:3px">Start Bewegung</div></div>
<svg style="position:absolute;left:832px;top:912px;" width="16" height="16" viewBox="0 0 16 16"><polygon points="16,0 16,16 0,16" fill="#1f3a5c"/></svg>
<svg style="position:absolute;left:109px;top:205px;pointer-events:none" width="739" height="723" viewBox="0 0 739 723"><circle cx="369" cy="362" r="290" fill="none" stroke="#53bcd0" stroke-width="1.4"/><circle cx="463" cy="315" r="3" fill="#fff"/><circle cx="468" cy="357" r="3" fill="#fff"/><circle cx="472" cy="371" r="3" fill="#fff"/><circle cx="479" cy="384" r="3" fill="#fff"/></svg>
<div style="position:absolute;left:858px;top:12px;white-space:nowrap;font-size:11px;color:#eee;-webkit-text-stroke:0.25px #eee">Filter</div>
<div style="position:absolute;left:889px;top:10px;width:151px;height:18px;background:#fff"><div style="left:3px;top:2px;font-size:11px;color:#111;white-space:nowrap">ICST AmbiEncoder</div></div>
<div style="position:absolute;left:1048px;top:7px;width:53px;height:23px;font-family:'Liberation Sans',sans-serif;font-size:11px;color:#111;background:linear-gradient(#e6e6e6,#f6f6f6);border:1px solid #9a9a9a;border-radius:2px;"><div style="left:0;top:0;width:100%;height:100%;display:flex;align-items:center;justify-content:center;white-space:nowrap">Clear</div></div>
<div style="position:absolute;left:1106px;top:7px;width:54px;height:23px;font-family:'Liberation Sans',sans-serif;font-size:11px;color:#111;background:linear-gradient(#e6e6e6,#f6f6f6);border:1px solid #9a9a9a;border-radius:2px;"><div style="left:0;top:0;width:100%;height:100%;display:flex;align-items:center;justify-content:center;white-space:nowrap">Options</div></div>
<div style="position:absolute;left:1164px;top:7px;width:94px;height:23px;font-family:'Liberation Sans',sans-serif;font-size:11px;color:#111;background:linear-gradient(#e6e6e6,#f6f6f6);border:1px solid #9a9a9a;border-radius:2px;"><div style="left:0;top:0;width:100%;height:100%;display:flex;align-items:center;justify-content:center;white-space:nowrap">Find shortcut...</div></div>
<div style="position:absolute;left:1268px;top:12px;white-space:nowrap;font-size:11px;color:#eee;-webkit-text-stroke:0.25px #eee">Section:</div>
<div style="position:absolute;left:1313px;top:9px;width:148px;height:19px;background:#fff;border-radius:2px"><div style="left:3px;top:3px;font-size:11px;color:#111">Main</div><svg style="position:absolute;right:5px;top:3px" width="8" height="13"><path d="M1 5 L4 2 L7 5 M1 8 L4 11 L7 8" fill="none" stroke="#333" stroke-width="1.2"/></svg></div>
<div style="position:absolute;left:856px;top:36px;width:605px;height:28px;background:#fff"></div>
<div style="position:absolute;left:866px;top:43px;white-space:nowrap;font-size:12px;color:#222">Shortcut</div>
<div style="position:absolute;left:1014px;top:41px;width:1px;height:18px;background:#ddd"></div>
<div style="position:absolute;left:1025px;top:43px;white-space:nowrap;font-size:12px;color:#222">Description</div>
<div style="position:absolute;left:856px;top:64px;width:605px;height:808px;background:#373737"></div>
<div style="position:absolute;left:1025px;top:70px;white-space:nowrap;font-size:12.5px;color:#f2f2f2;-webkit-text-stroke:0.25px #f2f2f2">Script: ICST AmbiEncoder_64 Circle.lua</div>
<div style="position:absolute;left:1025px;top:94px;white-space:nowrap;font-size:12.5px;color:#f2f2f2;-webkit-text-stroke:0.25px #f2f2f2">Script: ICST_AmbiEncoder_64_Circle+Walk.lua</div>
<div style="position:absolute;left:1025px;top:118px;white-space:nowrap;font-size:12.5px;color:#f2f2f2;-webkit-text-stroke:0.25px #f2f2f2">Script: ICST_AmbiEncoder_64_CircleSelected.lua</div>
<div style="position:absolute;left:856px;top:136px;width:605px;height:24px;background:#efefef"></div>
<div style="position:absolute;left:1025px;top:142px;white-space:nowrap;font-size:12.5px;color:#111">Script: ICST_AmbiEncoder_64_CircleSelected_Presets.lua</div>
<div style="position:absolute;left:1025px;top:166px;white-space:nowrap;font-size:12.5px;color:#f2f2f2;-webkit-text-stroke:0.25px #f2f2f2">Script: ICST_AmbiEncoder_64_CircleWalk.lua</div>
<div style="position:absolute;left:856px;top:872px;width:605px;height:15px;background:#fff"></div>
<div style="position:absolute;left:863px;top:925px;width:228px;height:52px;background:#393939"></div>
<div style="position:absolute;left:1096px;top:905px;width:61px;height:30px;font-family:'Liberation Sans',sans-serif;font-size:11px;color:#111;background:linear-gradient(#e6e6e6,#f6f6f6);border:1px solid #9a9a9a;border-radius:2px;"><div style="left:0;top:0;width:100%;height:100%;display:flex;align-items:center;justify-content:center;white-space:nowrap">Add...</div></div>
<div style="position:absolute;left:1096px;top:940px;width:61px;height:24px;background:#8a8a8a;border-radius:2px"><div style="left:0;top:5px;width:61px;text-align:center;font-size:11px;color:#aaa">Delete</div></div>
<div style="position:absolute;left:1269px;top:892px;width:94px;height:23px;font-family:'Liberation Sans',sans-serif;font-size:11px;color:#111;background:linear-gradient(#e6e6e6,#f6f6f6);border:1px solid #9a9a9a;border-radius:2px;"><div style="left:0;top:0;width:100%;height:100%;display:flex;align-items:center;justify-content:center;white-space:nowrap">Key map...</div></div>
<div style="position:absolute;left:1368px;top:892px;width:94px;height:23px;font-family:'Liberation Sans',sans-serif;font-size:11px;color:#111;background:linear-gradient(#e6e6e6,#f6f6f6);border:1px solid #9a9a9a;border-radius:2px;"><div style="left:0;top:0;width:100%;height:100%;display:flex;align-items:center;justify-content:center;white-space:nowrap">Menu editor...</div></div>
<div style="position:absolute;left:1170px;top:923px;width:94px;height:23px;font-family:'Liberation Sans',sans-serif;font-size:11px;color:#111;background:linear-gradient(#e6e6e6,#f6f6f6);border:1px solid #9a9a9a;border-radius:2px;"><div style="left:0;top:0;width:100%;height:100%;display:flex;align-items:center;justify-content:center;white-space:nowrap">New action...</div></div>
<div style="position:absolute;left:1269px;top:923px;width:94px;height:23px;font-family:'Liberation Sans',sans-serif;font-size:11px;color:#111;background:linear-gradient(#e6e6e6,#f6f6f6);border:1px solid #9a9a9a;border-radius:2px;"><div style="left:0;top:0;width:100%;height:100%;display:flex;align-items:center;justify-content:center;white-space:nowrap">Edit action...</div></div>
<div style="position:absolute;left:1368px;top:923px;width:94px;height:23px;font-family:'Liberation Sans',sans-serif;font-size:11px;color:#111;background:linear-gradient(#e6e6e6,#f6f6f6);border:1px solid #9a9a9a;border-radius:2px;"><div style="left:0;top:0;width:100%;height:100%;display:flex;align-items:center;justify-content:center;white-space:nowrap">Delete</div></div>
<div style="position:absolute;left:1170px;top:953px;width:94px;height:23px;font-family:'Liberation Sans',sans-serif;font-size:11px;color:#111;background:linear-gradient(#e6e6e6,#f6f6f6);border:1px solid #9a9a9a;border-radius:2px;"><div style="left:0;top:0;width:100%;height:100%;display:flex;align-items:center;justify-content:center;white-space:nowrap">Run</div></div>
<div style="position:absolute;left:1269px;top:953px;width:94px;height:23px;font-family:'Liberation Sans',sans-serif;font-size:11px;color:#111;background:linear-gradient(#e6e6e6,#f6f6f6);border:1px solid #9a9a9a;border-radius:2px;"><div style="left:0;top:0;width:100%;height:100%;display:flex;align-items:center;justify-content:center;white-space:nowrap">Run/close</div></div>
<div style="position:absolute;left:1368px;top:953px;width:94px;height:23px;font-family:'Liberation Sans',sans-serif;font-size:11px;color:#111;background:linear-gradient(#e6e6e6,#f6f6f6);border:1px solid #9a9a9a;border-radius:2px;"><div style="left:0;top:0;width:100%;height:100%;display:flex;align-items:center;justify-content:center;white-space:nowrap">Close</div></div>
<div style="position:absolute;left:1471px;top:0px;width:16px;height:984px;background:#3a3a3a"></div>
<div style="position:absolute;left:1471px;top:229px;width:15px;height:65px;background:#7c7c7c;border-radius:3px"></div>
<div class="vt" style="left:1472px;top:233px;width:13px;height:45px;font-size:11px;line-height:13px;color:#111;font-weight:bold;text-align:left">Actions</div>
<div style="position:absolute;left:1474px;top:281px;width:9px;height:9px;border:1px solid #555"><svg style="position:absolute;left:0;top:0" width="7" height="7"><path d="M1 1L6 6M6 1L1 6" stroke="#555" stroke-width="0.9"/></svg></div>
<div style="position:absolute;left:1472px;top:296px;width:14px;height:3px;background:#2e2e2e"></div>
<div class="vt" style="left:1472px;top:304px;width:13px;height:122px;font-size:11px;line-height:13px;color:#b8b8b8;font-weight:normal;text-align:left">Region/Marker Manager</div>
<div style="position:absolute;left:1474px;top:429px;width:9px;height:9px;border:1px solid #888"><svg style="position:absolute;left:0;top:0" width="7" height="7"><path d="M1 1L6 6M6 1L1 6" stroke="#888" stroke-width="0.9"/></svg></div>
<div style="position:absolute;left:1472px;top:444px;width:14px;height:3px;background:#2e2e2e"></div>
<div class="vt" style="left:1472px;top:454px;width:13px;height:77px;font-size:11px;line-height:13px;color:#b8b8b8;font-weight:normal;text-align:left">Media Explorer</div>
<div style="position:absolute;left:1474px;top:534px;width:9px;height:9px;border:1px solid #888"><svg style="position:absolute;left:0;top:0" width="7" height="7"><path d="M1 1L6 6M6 1L1 6" stroke="#888" stroke-width="0.9"/></svg></div>
<div style="position:absolute;left:1472px;top:549px;width:14px;height:3px;background:#2e2e2e"></div>
<div class="vt" style="left:1472px;top:559px;width:13px;height:60px;font-size:11px;line-height:13px;color:#b8b8b8;font-weight:normal;text-align:left">FX Browser</div>
<div style="position:absolute;left:1474px;top:622px;width:9px;height:9px;border:1px solid #888"><svg style="position:absolute;left:0;top:0" width="7" height="7"><path d="M1 1L6 6M6 1L1 6" stroke="#888" stroke-width="0.9"/></svg></div>
<div style="position:absolute;left:1472px;top:637px;width:14px;height:3px;background:#2e2e2e"></div>
<div class="vt" style="left:1472px;top:645px;width:13px;height:79px;font-size:11px;line-height:13px;color:#b8b8b8;font-weight:normal;text-align:left">Track Manager</div>
<div style="position:absolute;left:1474px;top:727px;width:9px;height:9px;border:1px solid #888"><svg style="position:absolute;left:0;top:0" width="7" height="7"><path d="M1 1L6 6M6 1L1 6" stroke="#888" stroke-width="0.9"/></svg></div>
<div style="position:absolute;left:1472px;top:742px;width:14px;height:3px;background:#2e2e2e"></div>
<div class="vt" style="left:1472px;top:752px;width:13px;height:110px;font-size:11px;line-height:13px;color:#b8b8b8;font-weight:normal;text-align:left">Region Render Matrix</div>
<div style="position:absolute;left:1474px;top:865px;width:9px;height:9px;border:1px solid #888"><svg style="position:absolute;left:0;top:0" width="7" height="7"><path d="M1 1L6 6M6 1L1 6" stroke="#888" stroke-width="0.9"/></svg></div>
<div style="position:absolute;left:1472px;top:880px;width:14px;height:3px;background:#2e2e2e"></div>
<div class="vt" style="left:1472px;top:888px;width:13px;height:67px;font-size:11px;line-height:13px;color:#b8b8b8;font-weight:normal;text-align:left">Performance</div>
<div style="position:absolute;left:1474px;top:958px;width:9px;height:9px;border:1px solid #888"><svg style="position:absolute;left:0;top:0" width="7" height="7"><path d="M1 1L6 6M6 1L1 6" stroke="#888" stroke-width="0.9"/></svg></div>
<div style="position:absolute;left:1472px;top:973px;width:14px;height:3px;background:#2e2e2e"></div>
<div style="position:absolute;left:1473px;top:977px;width:9px;height:3px;background:#ddd"></div>
<div style="position:absolute;left:863px;top:171px;width:402px;height:755px;border-radius:10px;box-shadow:0 4px 18px rgba(0,0,0,.55);background:#575757"></div>
<div style="position:absolute;left:864px;top:172px;width:400px;height:28px;background:linear-gradient(#ececec,#dcdcdc);border-radius:9px 9px 0 0"></div>
<div style="position:absolute;left:872px;top:180px;width:12px;height:12px;background:#cdcdcd;border:1px solid #bcbcbc;border-radius:50%"></div>
<div style="position:absolute;left:892px;top:180px;width:12px;height:12px;background:#cdcdcd;border:1px solid #bcbcbc;border-radius:50%"></div>
<div style="position:absolute;left:912px;top:180px;width:12px;height:12px;background:#cdcdcd;border:1px solid #bcbcbc;border-radius:50%"></div>
<div style="position:absolute;left:933px;top:177px;white-space:nowrap;font-size:14px;font-weight:bold;color:#a3a3a3">VST3: AmbiEncoder_64 (ICST) (4ch) - Track 1</div>
<svg style="position:absolute;left:1240px;top:176px;" width="16" height="18" viewBox="0 0 16 18"><path d="M4 1 H12 M8 1 V10 M3 10 H13 M8 10 V17" stroke="#c0c0c0" stroke-width="1.5" fill="none"/></svg>
<div style="position:absolute;left:864px;top:200px;width:400px;height:25px;background:#ebebeb;border-top:1px solid #cfcfcf"></div>
<div style="position:absolute;left:866px;top:202px;width:148px;height:19px;background:linear-gradient(#fff,#f0f0f0);border:1px solid #bdbdbd;border-radius:2px"><div style="left:3px;top:3px;font-size:11px;color:#111">No preset</div><svg style="position:absolute;right:5px;top:3px" width="8" height="13"><path d="M1 5 L4 2 L7 5 M1 8 L4 11 L7 8" fill="none" stroke="#333" stroke-width="1.2"/></svg></div>
<div style="position:absolute;left:1018px;top:202px;width:20px;height:19px;background:linear-gradient(#fff,#f0f0f0);border:1px solid #bdbdbd;border-radius:2px"><div style="left:0;top:3px;width:18px;text-align:center;font-size:11px;color:#111">+</div></div>
<div style="position:absolute;left:1042px;top:202px;width:51px;height:19px;background:linear-gradient(#fff,#f0f0f0);border:1px solid #bdbdbd;border-radius:2px"><div style="left:0;top:3px;width:49px;text-align:center;font-size:11px;color:#111">Param</div></div>
<div style="position:absolute;left:1097px;top:202px;width:85px;height:19px;background:linear-gradient(#fff,#f0f0f0);border:1px solid #bdbdbd;border-radius:2px"><div style="left:0;top:3px;width:83px;text-align:center;font-size:11px;color:#111">64 in+out</div></div>
<div style="position:absolute;left:1185px;top:202px;width:29px;height:19px;background:linear-gradient(#fff,#f0f0f0);border:1px solid #bdbdbd;border-radius:2px"><div style="left:0;top:3px;width:27px;text-align:center;font-size:11px;color:#111">UI</div></div>
<div style="position:absolute;left:1219px;top:203px;width:17px;height:17px;background:#3b3b3b;border-radius:50%"></div>
<div style="position:absolute;left:1243px;top:203px;width:17px;height:17px;background:#fff;border:1px solid #c8c8c8;border-radius:3px"><svg style="position:absolute;left:2px;top:2px" width="12" height="12"><path d="M1 6 L4.5 10 L11 1" fill="none" stroke="#111" stroke-width="2"/></svg></div>
<div style="position:absolute;left:864px;top:225px;width:400px;height:32px;background:#4e4e4e"></div>
<svg style="position:absolute;left:866px;top:227px;" width="28" height="28" viewBox="0 0 28 28"><polygon points="26.94,15.27 26.44,17.77 22.38,18.48 21.34,20.03 22.25,24.05 20.13,25.46 16.76,23.09 14.93,23.45 12.73,26.94 10.23,26.44 9.52,22.38 7.97,21.34 3.95,22.25 2.54,20.13 4.91,16.76 4.55,14.93 1.06,12.73 1.56,10.23 5.62,9.52 6.66,7.97 5.75,3.95 7.87,2.54 11.24,4.91 13.07,4.55 15.27,1.06 17.77,1.56 18.48,5.62 20.03,6.66 24.05,5.75 25.46,7.87 23.09,11.24 23.45,13.07" fill="#dedede"/><circle cx="14" cy="14" r="4.2" fill="#4e4e4e"/><circle cx="14" cy="14" r="7.5" fill="none" stroke="#b8c4d0" stroke-width="1"/></svg>
<div style="position:absolute;left:897px;top:230px;width:23px;height:23px;background:#b9b9b9;border-radius:50%"><div style="left:0;top:0px;width:23px;text-align:center;font-family:Liberation Serif,serif;font-size:20px;font-weight:bold;color:#4a4a4a">?</div></div>
<div style="position:absolute;left:1153px;top:234px;white-space:nowrap;font-size:13px;color:#f4f4f4;transform:scaleX(.83);transform-origin:left">AmbiEncoder 3.1.0.3</div>
<div style="position:absolute;left:864px;top:257px;width:400px;height:560px;background:#d4d4d4"></div>
<svg style="position:absolute;left:892px;top:272px;" width="344" height="344" viewBox="0 0 344 344"><defs><clipPath id="c272"><rect x="0" y="0" width="344" height="344"/></clipPath></defs><g clip-path="url(#c272)"><rect x="38" y="38" width="268" height="268" fill="#c4d8c0"/><circle cx="172" cy="172" r="13.4" fill="none" stroke="rgba(45,60,45,.68)" stroke-width="1.1"/><circle cx="172" cy="172" r="26.8" fill="none" stroke="rgba(45,60,45,.68)" stroke-width="1.1"/><circle cx="172" cy="172" r="40.2" fill="none" stroke="rgba(45,60,45,.68)" stroke-width="1.1"/><circle cx="172" cy="172" r="53.6" fill="none" stroke="rgba(45,60,45,.68)" stroke-width="1.1"/><circle cx="172" cy="172" r="67.0" fill="none" stroke="rgba(45,60,45,.68)" stroke-width="1.1"/><circle cx="172" cy="172" r="80.4" fill="none" stroke="rgba(45,60,45,.68)" stroke-width="1.1"/><circle cx="172" cy="172" r="93.8" fill="none" stroke="rgba(45,60,45,.68)" stroke-width="1.1"/><circle cx="172" cy="172" r="107.2" fill="none" stroke="rgba(45,60,45,.68)" stroke-width="1.1"/><circle cx="172" cy="172" r="120.6" fill="none" stroke="rgba(45,60,45,.68)" stroke-width="1.1"/><circle cx="172" cy="172" r="134.0" fill="none" stroke="rgba(45,60,45,.68)" stroke-width="1.1"/><circle cx="172" cy="172" r="147.4" fill="none" stroke="rgba(45,60,45,.68)" stroke-width="1.1"/><circle cx="172" cy="172" r="160.8" fill="none" stroke="rgba(45,60,45,.68)" stroke-width="1.1"/><circle cx="172" cy="172" r="174.2" fill="none" stroke="rgba(45,60,45,.68)" stroke-width="1.1"/><circle cx="172" cy="172" r="187.6" fill="none" stroke="rgba(45,60,45,.68)" stroke-width="1.1"/><line x1="0" y1="172" x2="344" y2="172" stroke="rgba(50,66,50,.75)" stroke-width="2"/><line x1="172" y1="0" x2="172" y2="344" stroke="rgba(50,66,50,.75)" stroke-width="2"/><text x="175" y="157.6" font-family="Liberation Sans" font-size="13.5" fill="#6e6e6e" transform="scale(0.9 1)" transform-origin="172 0">0.1</text><text x="175" y="144.2" font-family="Liberation Sans" font-size="13.5" fill="#6e6e6e" transform="scale(0.9 1)" transform-origin="172 0">0.2</text><text x="175" y="130.8" font-family="Liberation Sans" font-size="13.5" fill="#6e6e6e" transform="scale(0.9 1)" transform-origin="172 0">0.3</text><text x="175" y="117.4" font-family="Liberation Sans" font-size="13.5" fill="#6e6e6e" transform="scale(0.9 1)" transform-origin="172 0">0.4</text><text x="175" y="104.0" font-family="Liberation Sans" font-size="13.5" fill="#6e6e6e" transform="scale(0.9 1)" transform-origin="172 0">0.5</text><text x="175" y="90.6" font-family="Liberation Sans" font-size="13.5" fill="#6e6e6e" transform="scale(0.9 1)" transform-origin="172 0">0.6</text><text x="175" y="77.2" font-family="Liberation Sans" font-size="13.5" fill="#6e6e6e" transform="scale(0.9 1)" transform-origin="172 0">0.7</text><text x="175" y="63.8" font-family="Liberation Sans" font-size="13.5" fill="#6e6e6e" transform="scale(0.9 1)" transform-origin="172 0">0.8</text><text x="175" y="50.39999999999999" font-family="Liberation Sans" font-size="13.5" fill="#6e6e6e" transform="scale(0.9 1)" transform-origin="172 0">0.9</text><text x="175" y="37.0" font-family="Liberation Sans" font-size="13.5" fill="#6e6e6e" transform="scale(0.9 1)" transform-origin="172 0">1</text><text x="175" y="23.599999999999994" font-family="Liberation Sans" font-size="13.5" fill="#6e6e6e" transform="scale(0.9 1)" transform-origin="172 0">1.1</text><text x="175" y="10.199999999999989" font-family="Liberation Sans" font-size="13.5" fill="#6e6e6e" transform="scale(0.9 1)" transform-origin="172 0">1.2</text></g><rect x="0.5" y="0.5" width="343" height="343" fill="none" stroke="#5a5a5a" stroke-width="1"/></svg>
<div style="position:absolute;left:1034.0px;top:257px;width:60px;text-align:center;white-space:nowrap;font-size:13.5px;color:#222;-webkit-text-stroke:0.25px #222">Front</div>
<div style="left:877px;top:424px;width:14px;height:40px;writing-mode:vertical-rl;transform:rotate(180deg);font-size:13.5px;color:#222;text-align:center;line-height:14px">Left</div>
<div style="left:1237px;top:420px;width:14px;height:48px;writing-mode:vertical-rl;font-size:13.5px;color:#222;text-align:center;line-height:14px">Right</div>
<div style="position:absolute;left:1213px;top:434px;width:20px;height:20px;background:#cfe0cb;border:1px solid #4f7a4f"><div style="left:0;top:2px;width:18px;text-align:center;font-size:13px;color:#3a6a3a">X</div></div>
<svg style="position:absolute;left:1095px;top:400px;" width="40" height="70" viewBox="0 0 40 70"><g fill="#1a74e8"><circle cx="12.5" cy="22.5" r="5.8"/><circle cx="15.5" cy="42" r="5.8"/><circle cx="17.5" cy="49" r="5.8"/><circle cx="20" cy="56" r="5.8"/></g><text x="17" y="16" font-family="Liberation Sans" font-size="16" fill="#111">6</text><text x="22" y="37" font-family="Liberation Sans" font-size="16" fill="#111">3</text><text x="24" y="45" font-family="Liberation Sans" font-size="16" fill="#111">2</text><text x="26" y="48" font-family="Liberation Sans" font-size="16" fill="#111">1</text></svg>
<div style="position:absolute;left:1054px;top:594px;width:20px;height:20px;background:#cfe0cb;border:1px solid #4f7a4f"><div style="left:0;top:2px;width:18px;text-align:center;font-size:13px;color:#3a6a3a">Y</div></div>
<div style="position:absolute;left:1034.0px;top:617px;width:60px;text-align:center;white-space:nowrap;font-size:13.5px;color:#222;-webkit-text-stroke:0.25px #222">Back</div>
<div style="position:absolute;left:1034.0px;top:632px;width:60px;text-align:center;white-space:nowrap;font-size:13.5px;color:#222;-webkit-text-stroke:0.25px #222">Top</div>
<svg style="position:absolute;left:892px;top:646px;" width="344" height="171" viewBox="0 0 344 171"><defs><clipPath id="c646"><rect x="0" y="0" width="344" height="171"/></clipPath></defs><g clip-path="url(#c646)"><rect x="38" y="37" width="268" height="268" fill="#c4d8c0"/><circle cx="172" cy="171" r="13.4" fill="none" stroke="rgba(45,60,45,.68)" stroke-width="1.1"/><circle cx="172" cy="171" r="26.8" fill="none" stroke="rgba(45,60,45,.68)" stroke-width="1.1"/><circle cx="172" cy="171" r="40.2" fill="none" stroke="rgba(45,60,45,.68)" stroke-width="1.1"/><circle cx="172" cy="171" r="53.6" fill="none" stroke="rgba(45,60,45,.68)" stroke-width="1.1"/><circle cx="172" cy="171" r="67.0" fill="none" stroke="rgba(45,60,45,.68)" stroke-width="1.1"/><circle cx="172" cy="171" r="80.4" fill="none" stroke="rgba(45,60,45,.68)" stroke-width="1.1"/><circle cx="172" cy="171" r="93.8" fill="none" stroke="rgba(45,60,45,.68)" stroke-width="1.1"/><circle cx="172" cy="171" r="107.2" fill="none" stroke="rgba(45,60,45,.68)" stroke-width="1.1"/><circle cx="172" cy="171" r="120.6" fill="none" stroke="rgba(45,60,45,.68)" stroke-width="1.1"/><circle cx="172" cy="171" r="134.0" fill="none" stroke="rgba(45,60,45,.68)" stroke-width="1.1"/><circle cx="172" cy="171" r="147.4" fill="none" stroke="rgba(45,60,45,.68)" stroke-width="1.1"/><circle cx="172" cy="171" r="160.8" fill="none" stroke="rgba(45,60,45,.68)" stroke-width="1.1"/><circle cx="172" cy="171" r="174.2" fill="none" stroke="rgba(45,60,45,.68)" stroke-width="1.1"/><circle cx="172" cy="171" r="187.6" fill="none" stroke="rgba(45,60,45,.68)" stroke-width="1.1"/><line x1="0" y1="171" x2="344" y2="171" stroke="rgba(50,66,50,.75)" stroke-width="2"/><line x1="172" y1="0" x2="172" y2="171" stroke="rgba(50,66,50,.75)" stroke-width="2"/><text x="175" y="156.6" font-family="Liberation Sans" font-size="13.5" fill="#6e6e6e" transform="scale(0.9 1)" transform-origin="172 0">0.1</text><text x="175" y="143.2" font-family="Liberation Sans" font-size="13.5" fill="#6e6e6e" transform="scale(0.9 1)" transform-origin="172 0">0.2</text><text x="175" y="129.8" font-family="Liberation Sans" font-size="13.5" fill="#6e6e6e" transform="scale(0.9 1)" transform-origin="172 0">0.3</text><text x="175" y="116.4" font-family="Liberation Sans" font-size="13.5" fill="#6e6e6e" transform="scale(0.9 1)" transform-origin="172 0">0.4</text><text x="175" y="103.0" font-family="Liberation Sans" font-size="13.5" fill="#6e6e6e" transform="scale(0.9 1)" transform-origin="172 0">0.5</text><text x="175" y="89.6" font-family="Liberation Sans" font-size="13.5" fill="#6e6e6e" transform="scale(0.9 1)" transform-origin="172 0">0.6</text><text x="175" y="76.2" font-family="Liberation Sans" font-size="13.5" fill="#6e6e6e" transform="scale(0.9 1)" transform-origin="172 0">0.7</text><text x="175" y="62.8" font-family="Liberation Sans" font-size="13.5" fill="#6e6e6e" transform="scale(0.9 1)" transform-origin="172 0">0.8</text><text x="175" y="49.39999999999999" font-family="Liberation Sans" font-size="13.5" fill="#6e6e6e" transform="scale(0.9 1)" transform-origin="172 0">0.9</text><text x="175" y="36.0" font-family="Liberation Sans" font-size="13.5" fill="#6e6e6e" transform="scale(0.9 1)" transform-origin="172 0">1</text><text x="175" y="22.599999999999994" font-family="Liberation Sans" font-size="13.5" fill="#6e6e6e" transform="scale(0.9 1)" transform-origin="172 0">1.1</text><text x="175" y="9.199999999999989" font-family="Liberation Sans" font-size="13.5" fill="#6e6e6e" transform="scale(0.9 1)" transform-origin="172 0">1.2</text></g><rect x="0.5" y="0.5" width="343" height="170" fill="none" stroke="#5a5a5a" stroke-width="1"/></svg>
<div style="position:absolute;left:1043px;top:648px;width:20px;height:20px;background:#cfe0cb;border:1px solid #4f7a4f"><div style="left:0;top:2px;width:18px;text-align:center;font-size:13px;color:#3a6a3a">Z</div></div>
<div style="position:absolute;left:1214px;top:796px;width:20px;height:20px;background:#cfe0cb;border:1px solid #4f7a4f"><div style="left:0;top:2px;width:18px;text-align:center;font-size:13px;color:#3a6a3a">X</div></div>
<div style="position:absolute;left:1113px;top:797px;white-space:nowrap;font-size:16px;color:#111;letter-spacing:-4px;-webkit-text-stroke:0.3px #111">61</div>
<div style="position:absolute;left:864px;top:817px;width:400px;height:108px;background:#575757;border-radius:0 0 9px 9px"></div>
<svg style="position:absolute;left:1010px;top:806px;" width="120" height="22" viewBox="0 0 120 22"><path d="M7 11 Q55 26 110 11 Z" fill="#1a74e8"/><ellipse cx="101" cy="10" rx="10" ry="5" fill="#1a74e8"/></svg>
<div style="position:absolute;left:973px;top:836px;white-space:nowrap;font-size:13.5px;color:#f0f0f0;-webkit-text-stroke:0.3px #f0f0f0">CH:</div>
<div style="position:absolute;left:1004px;top:832px;width:24px;height:24px;background:#2a3038;border:1px solid #9a9a9a"><div style="left:6px;top:4px;font-size:12px;color:#eee">–</div></div>
<div style="position:absolute;left:1052px;top:836px;white-space:nowrap;font-size:13.5px;color:#f0f0f0;-webkit-text-stroke:0.3px #f0f0f0">Name:</div>
<div style="position:absolute;left:1106px;top:832px;width:147px;height:24px;background:#2a3038"><div style="left:6px;top:4px;font-size:12px;color:#eee">–</div></div>
<div style="position:absolute;left:869px;top:870px;white-space:nowrap;font-size:13.5px;color:#f0f0f0;-webkit-text-stroke:0.3px #f0f0f0">Cartesian XYZ:</div>
<div style="position:absolute;left:869px;top:902px;white-space:nowrap;font-size:13.5px;color:#f0f0f0;-webkit-text-stroke:0.3px #f0f0f0">Polar AED:</div>
<div style="position:absolute;left:975px;top:865px;width:90px;height:24px;background:#2a3038"><div style="left:75px;top:6px;font-size:12px;color:#eee">–</div></div>
<div style="position:absolute;left:1068px;top:865px;width:91px;height:24px;background:#2a3038"><div style="left:76px;top:6px;font-size:12px;color:#eee">–</div></div>
<div style="position:absolute;left:1162px;top:865px;width:91px;height:24px;background:#2a3038"><div style="left:76px;top:6px;font-size:12px;color:#eee">–</div></div>
<div style="position:absolute;left:975px;top:897px;width:90px;height:24px;background:#2a3038"><div style="left:75px;top:6px;font-size:12px;color:#eee">–</div></div>
<div style="position:absolute;left:1068px;top:897px;width:91px;height:24px;background:#2a3038"><div style="left:76px;top:6px;font-size:12px;color:#eee">–</div></div>
<div style="position:absolute;left:1162px;top:897px;width:91px;height:24px;background:#2a3038"><div style="left:76px;top:6px;font-size:12px;color:#eee">–</div></div>
<svg style="position:absolute;left:1246px;top:905px;" width="18" height="18" viewBox="0 0 18 18"><path d="M17 2 L2 17 M17 7 L7 17 M17 12 L12 17" stroke="#bbb" stroke-width="1.2"/></svg>
<svg style="position:absolute;left:1541px;top:-40px;" width="34" height="48" viewBox="0 0 34 48"><path d="M1 1 H22 L33 12 V47 H1 Z" fill="#f2f2f2" stroke="#cfcfcf"/></svg>
<div style="position:absolute;left:1493.0px;top:17px;width:130px;text-align:center;white-space:nowrap;font-size:12px;color:#fff;font-weight:bold;text-shadow:0 1px 2px rgba(0,0,0,.8);line-height:14px">ICST_AmbiEnc</div>
<div style="position:absolute;left:1493.0px;top:32px;width:130px;text-align:center;white-space:nowrap;font-size:12px;color:#fff;font-weight:bold;text-shadow:0 1px 2px rgba(0,0,0,.8);line-height:14px">oder_...lkl.lua</div>
<div style="position:absolute;left:1493.0px;top:47px;width:130px;text-align:center;white-space:nowrap;font-size:10.5px;color:#fff;font-weight:bold;text-shadow:0 1px 2px rgba(0,0,0,.8);line-height:13px">2.9 KB</div>
<svg style="position:absolute;left:1540.5px;top:68px;" width="35" height="46" viewBox="0 0 35 46"><path d="M1 1 H23 L34 12 V45 H1 Z" fill="#f2f2f2" stroke="#cfcfcf"/><path d="M23 1 V12 H34" fill="#dcdcdc" stroke="#cfcfcf"/></svg>
<div style="position:absolute;left:1538.0px;top:119px;width:40px;text-align:center;white-space:nowrap;font-size:12px;color:#fff;font-weight:bold;text-shadow:0 1px 2px rgba(0,0,0,.8);line-height:14px">—</div>
<div style="position:absolute;left:1508.0px;top:134px;width:100px;text-align:center;white-space:nowrap;font-size:10.5px;color:#fff;font-weight:bold;text-shadow:0 1px 2px rgba(0,0,0,.8);line-height:13px">336 Bytes</div>
<svg style="position:absolute;left:1536px;top:173px;" width="44" height="44" viewBox="0 0 44 44"><path d="M6 1 H38 L42 36 H2 Z" fill="#e8a820"/><path d="M8 4 H36 L39 33 H5 Z" fill="#f5b81c"/><rect x="1" y="36" width="42" height="7" rx="3" fill="#b8b8b8"/></svg>
<div style="position:absolute;left:1511px;top:224px;width:96px;height:30px;background:#1d6fb5;border-radius:5px"></div>
<div style="position:absolute;left:1493.0px;top:224px;width:130px;text-align:center;white-space:nowrap;font-size:12px;color:#fff;font-weight:bold;text-shadow:0 1px 2px rgba(0,0,0,.8);line-height:14px">Projekte_Joha</div>
<div style="position:absolute;left:1493.0px;top:239px;width:130px;text-align:center;white-space:nowrap;font-size:12px;color:#fff;font-weight:bold;text-shadow:0 1px 2px rgba(0,0,0,.8);line-height:14px">nnes_...tt_2T</div>
<div style="position:absolute;left:1493.0px;top:254px;width:130px;text-align:center;white-space:nowrap;font-size:10.5px;color:#fff;font-weight:bold;text-shadow:0 1px 2px rgba(0,0,0,.8);line-height:13px">1.9 TB,...GB frei</div>
<svg style="position:absolute;left:1535px;top:281px;" width="46" height="38" viewBox="0 0 46 38"><path d="M1 4 Q1 1 4 1 H16 L20 5 H42 Q45 5 45 8 V35 Q45 37 42 37 H4 Q1 37 1 35 Z" fill="#3fa8e8"/><rect x="1" y="9" width="44" height="28" rx="3" fill="#62bff4"/></svg>
<div style="position:absolute;left:1493.0px;top:327px;width:130px;text-align:center;white-space:nowrap;font-size:12px;color:#fff;font-weight:bold;text-shadow:0 1px 2px rgba(0,0,0,.8);line-height:14px">Bformat_to_S</div>
<div style="position:absolute;left:1493.0px;top:342px;width:130px;text-align:center;white-space:nowrap;font-size:12px;color:#fff;font-weight:bold;text-shadow:0 1px 2px rgba(0,0,0,.8);line-height:14px">PS_Atmos</div>
<div style="position:absolute;left:1493.0px;top:357px;width:130px;text-align:center;white-space:nowrap;font-size:10.5px;color:#fff;font-weight:bold;text-shadow:0 1px 2px rgba(0,0,0,.8);line-height:13px">3 Objekte</div>
<svg style="position:absolute;left:1544.5px;top:400px;" width="35" height="46" viewBox="0 0 35 46"><path d="M1 1 H23 L34 12 V45 H1 Z" fill="#f2f2f2" stroke="#cfcfcf"/><path d="M23 1 V12 H34" fill="#dcdcdc" stroke="#cfcfcf"/></svg>
<div style="position:absolute;left:1496.0px;top:451px;width:130px;text-align:center;white-space:nowrap;font-size:12px;color:#fff;font-weight:bold;text-shadow:0 1px 2px rgba(0,0,0,.8);line-height:14px">spiralwalk_pre</div>
<div style="position:absolute;left:1496.0px;top:466px;width:130px;text-align:center;white-space:nowrap;font-size:12px;color:#fff;font-weight:bold;text-shadow:0 1px 2px rgba(0,0,0,.8);line-height:14px">sets.json</div>
<div style="position:absolute;left:1496.0px;top:481px;width:130px;text-align:center;white-space:nowrap;font-size:10.5px;color:#fff;font-weight:bold;text-shadow:0 1px 2px rgba(0,0,0,.8);line-height:13px"></div>
<svg style="position:absolute;left:1536px;top:485px;" width="44" height="44" viewBox="0 0 44 44"><path d="M6 1 H38 L42 36 H2 Z" fill="#e8a820"/><path d="M8 4 H36 L39 33 H5 Z" fill="#f5b81c"/><rect x="1" y="36" width="42" height="7" rx="3" fill="#b8b8b8"/></svg>
<div style="position:absolute;left:1493.0px;top:535px;width:130px;text-align:center;white-space:nowrap;font-size:12px;color:#fff;font-weight:bold;text-shadow:0 1px 2px rgba(0,0,0,.8);line-height:14px">support</div>
<div style="position:absolute;left:1493.0px;top:550px;width:130px;text-align:center;white-space:nowrap;font-size:10.5px;color:#fff;font-weight:bold;text-shadow:0 1px 2px rgba(0,0,0,.8);line-height:13px">4.1 TB,...GB frei</div>
<svg style="position:absolute;left:1538.5px;top:585px;" width="39" height="50" viewBox="0 0 39 50"><path d="M1 1 H27 L38 12 V49 H1 Z" fill="#f2f2f2" stroke="#cfcfcf"/><path d="M27 1 V12 H38" fill="#dcdcdc" stroke="#cfcfcf"/><rect x="6" y="16" width="25" height="1.2" fill="#999"/><rect x="6" y="20" width="25" height="1.2" fill="#999"/><rect x="6" y="24" width="25" height="1.2" fill="#999"/><rect x="6" y="28" width="25" height="1.2" fill="#999"/><rect x="6" y="32" width="25" height="1.2" fill="#999"/><rect x="6" y="36" width="25" height="1.2" fill="#999"/></svg>
<div style="position:absolute;left:1493.0px;top:639px;width:130px;text-align:center;white-space:nowrap;font-size:12px;color:#fff;font-weight:bold;text-shadow:0 1px 2px rgba(0,0,0,.8);line-height:14px">ICST</div>
<div style="position:absolute;left:1493.0px;top:654px;width:130px;text-align:center;white-space:nowrap;font-size:12px;color:#fff;font-weight:bold;text-shadow:0 1px 2px rgba(0,0,0,.8);line-height:14px">AmbiE...ine.lua</div>
<div style="position:absolute;left:1493.0px;top:669px;width:130px;text-align:center;white-space:nowrap;font-size:10.5px;color:#fff;font-weight:bold;text-shadow:0 1px 2px rgba(0,0,0,.8);line-height:13px">4.2 KB</div>
<div style="position:absolute;left:1536px;top:695px;width:44px;height:40px;background:#1a2230;border:2px solid #ddd"><div style="left:6px;top:8px;width:28px;height:20px;border-radius:50%;border:1px solid #3a5a7a"></div></div>
<div style="position:absolute;left:1493.0px;top:743px;width:130px;text-align:center;white-space:nowrap;font-size:12px;color:#fff;font-weight:bold;text-shadow:0 1px 2px rgba(0,0,0,.8);line-height:14px">Bildschirmfoto</div>
<div style="position:absolute;left:1493.0px;top:758px;width:130px;text-align:center;white-space:nowrap;font-size:12px;color:#fff;font-weight:bold;text-shadow:0 1px 2px rgba(0,0,0,.8);line-height:14px">2025-...11.png</div>
<div style="position:absolute;left:1493.0px;top:773px;width:130px;text-align:center;white-space:nowrap;font-size:10.5px;color:#fff;font-weight:bold;text-shadow:0 1px 2px rgba(0,0,0,.8);line-height:13px">1'720 x...50.7 KB</div>
<div style="position:absolute;left:1536px;top:800px;width:44px;height:40px;background:#101418;border:2px solid #ddd"><div style="left:4px;top:5px;width:20px;height:1px;background:#4a8a6a"></div><div style="left:4px;top:9px;width:25px;height:1px;background:#4a8a6a"></div><div style="left:4px;top:13px;width:30px;height:1px;background:#4a8a6a"></div><div style="left:4px;top:17px;width:20px;height:1px;background:#4a8a6a"></div><div style="left:4px;top:21px;width:25px;height:1px;background:#4a8a6a"></div><div style="left:4px;top:25px;width:30px;height:1px;background:#4a8a6a"></div><div style="left:4px;top:29px;width:20px;height:1px;background:#4a8a6a"></div></div>
<div style="position:absolute;left:1493.0px;top:847px;width:130px;text-align:center;white-space:nowrap;font-size:12px;color:#fff;font-weight:bold;text-shadow:0 1px 2px rgba(0,0,0,.8);line-height:14px">Bildschirmfoto</div>
<div style="position:absolute;left:1493.0px;top:862px;width:130px;text-align:center;white-space:nowrap;font-size:12px;color:#fff;font-weight:bold;text-shadow:0 1px 2px rgba(0,0,0,.8);line-height:14px">2025-...4.png</div>
<div style="position:absolute;left:1493.0px;top:877px;width:130px;text-align:center;white-space:nowrap;font-size:10.5px;color:#fff;font-weight:bold;text-shadow:0 1px 2px rgba(0,0,0,.8);line-height:13px">1'838 x.../ 1.2 MB</div>
<svg style="position:absolute;left:1539.5px;top:897px;" width="37" height="48" viewBox="0 0 37 48"><path d="M1 1 H25 L36 12 V47 H1 Z" fill="#f2f2f2" stroke="#cfcfcf"/><path d="M25 1 V12 H36" fill="#dcdcdc" stroke="#cfcfcf"/><rect x="6" y="16" width="23" height="1.2" fill="#999"/><rect x="6" y="20" width="23" height="1.2" fill="#999"/><rect x="6" y="24" width="23" height="1.2" fill="#999"/><rect x="6" y="28" width="23" height="1.2" fill="#999"/><rect x="6" y="32" width="23" height="1.2" fill="#999"/><rect x="6" y="36" width="23" height="1.2" fill="#999"/></svg>
<div style="position:absolute;left:1493.0px;top:950px;width:130px;text-align:center;white-space:nowrap;font-size:12px;color:#fff;font-weight:bold;text-shadow:0 1px 2px rgba(0,0,0,.8);line-height:14px">ICST_Circle_Po</div>
<div style="position:absolute;left:1493.0px;top:965px;width:130px;text-align:center;white-space:nowrap;font-size:12px;color:#fff;font-weight:bold;text-shadow:0 1px 2px rgba(0,0,0,.8);line-height:14px">int1.lua</div>
<div style="position:absolute;left:1493.0px;top:980px;width:130px;text-align:center;white-space:nowrap;font-size:10.5px;color:#fff;font-weight:bold;text-shadow:0 1px 2px rgba(0,0,0,.8);line-height:13px">2.1 KB</div>
<div style="position:absolute;left:1487px;top:17px;white-space:nowrap;font-size:12px;color:#fff;font-weight:bold;text-shadow:0 1px 2px rgba(0,0,0,.8);line-height:14px">o</div>
<div style="position:absolute;left:1487px;top:120px;white-space:nowrap;font-size:12px;color:#fff;font-weight:bold;text-shadow:0 1px 2px rgba(0,0,0,.8);line-height:14px">a</div>
<div style="position:absolute;left:1487px;top:201px;white-space:nowrap;font-size:12px;color:#fff;font-weight:bold;text-shadow:0 1px 2px rgba(0,0,0,.8);line-height:14px">ne</div>
<div style="position:absolute;left:1487px;top:215px;white-space:nowrap;font-size:12px;color:#fff;font-weight:bold;text-shadow:0 1px 2px rgba(0,0,0,.8);line-height:14px">lua</div>
<div style="position:absolute;left:1487px;top:229px;white-space:nowrap;font-size:12px;color:#fff;font-weight:bold;text-shadow:0 1px 2px rgba(0,0,0,.8);line-height:14px">B</div>
<div style="position:absolute;left:1487px;top:327px;white-space:nowrap;font-size:12px;color:#fff;font-weight:bold;text-shadow:0 1px 2px rgba(0,0,0,.8);line-height:14px">o</div>
<div style="position:absolute;left:1487px;top:341px;white-space:nowrap;font-size:12px;color:#fff;font-weight:bold;text-shadow:0 1px 2px rgba(0,0,0,.8);line-height:14px">g</div>
<div style="position:absolute;left:1487px;top:355px;white-space:nowrap;font-size:12px;color:#fff;font-weight:bold;text-shadow:0 1px 2px rgba(0,0,0,.8);line-height:14px">B</div>
<div style="position:absolute;left:1487px;top:459px;white-space:nowrap;font-size:12px;color:#fff;font-weight:bold;text-shadow:0 1px 2px rgba(0,0,0,.8);line-height:14px">CST</div>
<div style="position:absolute;left:1487px;top:473px;white-space:nowrap;font-size:12px;color:#fff;font-weight:bold;text-shadow:0 1px 2px rgba(0,0,0,.8);line-height:14px">...nie.lua</div>
<div style="position:absolute;left:1487px;top:487px;white-space:nowrap;font-size:12px;color:#fff;font-weight:bold;text-shadow:0 1px 2px rgba(0,0,0,.8);line-height:14px">3 KB</div>
<div style="position:absolute;left:1487px;top:534px;white-space:nowrap;font-size:12px;color:#fff;font-weight:bold;text-shadow:0 1px 2px rgba(0,0,0,.8);line-height:14px">6</div>
<div style="position:absolute;left:1487px;top:548px;white-space:nowrap;font-size:12px;color:#fff;font-weight:bold;text-shadow:0 1px 2px rgba(0,0,0,.8);line-height:14px">a</div>
<div style="position:absolute;left:1487px;top:158px;width:7px;height:36px;background:#e8e8e8;border-radius:0 3px 3px 0"></div>
<div style="position:absolute;left:1487px;top:405px;width:14px;height:52px;background:#eee;border-radius:0 3px 3px 0"></div>
<div style="position:absolute;left:1618px;top:17px;white-space:nowrap;font-size:12px;color:#fff;font-weight:bold;text-shadow:0 1px 2px rgba(0,0,0,.8);line-height:14px">o</div>
<div style="position:absolute;left:1618px;top:226px;white-space:nowrap;font-size:12px;color:#fff;font-weight:bold;text-shadow:0 1px 2px rgba(0,0,0,.8);line-height:14px">2</div>
<div style="position:absolute;left:1618px;top:548px;white-space:nowrap;font-size:12px;color:#fff;font-weight:bold;text-shadow:0 1px 2px rgba(0,0,0,.8);line-height:14px">4</div>
<div style="position:absolute;left:1618px;top:638px;white-space:nowrap;font-size:12px;color:#fff;font-weight:bold;text-shadow:0 1px 2px rgba(0,0,0,.8);line-height:14px">S</div>
<div style="position:absolute;left:1618px;top:667px;white-space:nowrap;font-size:12px;color:#fff;font-weight:bold;text-shadow:0 1px 2px rgba(0,0,0,.8);line-height:14px">C</div>
<div style="position:absolute;left:1618px;top:774px;white-space:nowrap;font-size:12px;color:#fff;font-weight:bold;text-shadow:0 1px 2px rgba(0,0,0,.8);line-height:14px">IC</div>
<div style="position:absolute;left:1618px;top:902px;white-space:nowrap;font-size:12px;color:#fff;font-weight:bold;text-shadow:0 1px 2px rgba(0,0,0,.8);line-height:14px">I</div>
<div style="position:absolute;left:1591px;top:788px;white-space:nowrap;font-size:12px;color:#fff;font-weight:bold;text-shadow:0 1px 2px rgba(0,0,0,.8);line-height:14px">AmbiE</div>
<div style="position:absolute;left:1614px;top:802px;white-space:nowrap;font-size:10.5px;color:#fff;font-weight:bold;text-shadow:0 1px 2px rgba(0,0,0,.8);line-height:13px">5.3</div>
<div style="position:absolute;left:1620px;top:253px;white-space:nowrap;font-size:10.5px;color:#fff;font-weight:bold;text-shadow:0 1px 2px rgba(0,0,0,.8);line-height:13px">1</div>
<div style="position:absolute;left:1619px;top:342px;white-space:nowrap;font-size:12px;color:#fff;font-weight:bold;text-shadow:0 1px 2px rgba(0,0,0,.8);line-height:14px">X</div>
<div style="position:absolute;left:1619px;top:225px;width:9px;height:29px;background:#1d6fb5;border-radius:5px 0 0 5px"></div>
<div style="position:absolute;left:1620px;top:535px;width:10px;height:14px;background:#c0282a;border-radius:50%"></div>
<div style="position:absolute;left:1614px;top:724px;width:14px;height:44px;background:#eee"></div>
</body></html>
